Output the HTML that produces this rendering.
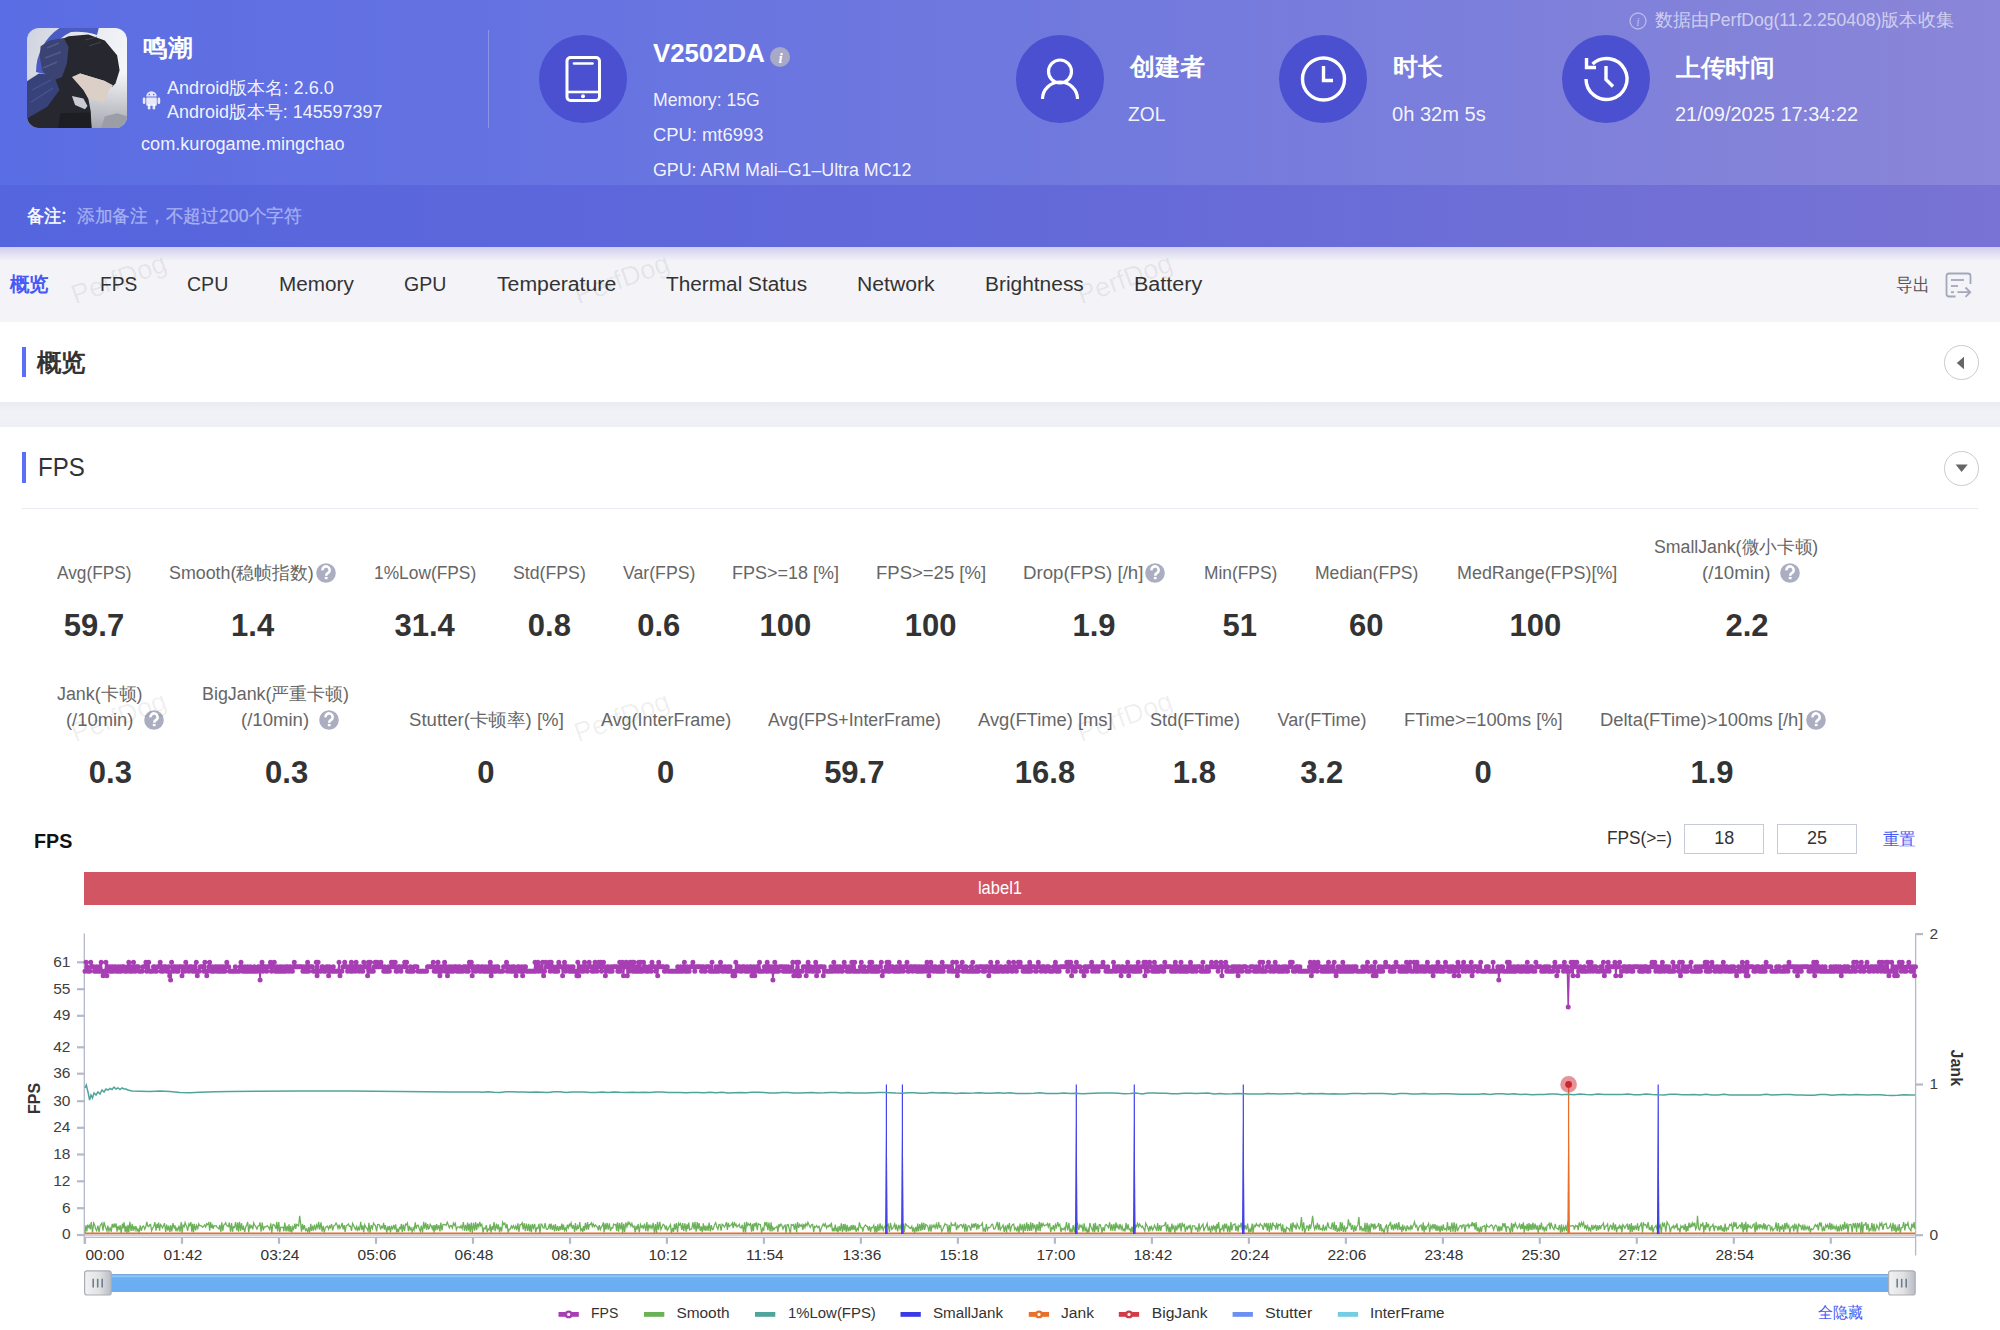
<!DOCTYPE html>
<html><head><meta charset="utf-8">
<style>
html,body{margin:0;padding:0;}
body{width:2000px;height:1330px;overflow:hidden;position:relative;background:#fff;font-family:"Liberation Sans",sans-serif;}
.a{position:absolute;}
.t{position:absolute;white-space:nowrap;font-family:"Liberation Sans",sans-serif;}
#hdr{position:absolute;left:0;top:0;width:2000px;height:185px;background:linear-gradient(90deg,#5b6de4 0%,#6f78de 50%,#8a86d8 100%);}
#note{position:absolute;left:0;top:185px;width:2000px;height:62px;background:linear-gradient(90deg,#5565de 0%,#6369d9 50%,#7873d4 100%);}
#tabs{position:absolute;left:0;top:247px;width:2000px;height:75px;background:#f3f3f8;}
#tabshadow{position:absolute;left:0;top:247px;width:2000px;height:14px;background:linear-gradient(180deg,rgba(120,110,210,0.28),rgba(120,110,210,0));}
.circ{position:absolute;width:88px;height:88px;border-radius:50%;background:#4b50d0;}
.bar{position:absolute;left:22px;width:4px;background:#5a6ff5;}
.cbtn{position:absolute;width:32.6px;height:32.6px;border:1px solid #c9ccd4;border-radius:50%;background:#fff;}
.q{position:absolute;width:20px;height:20px;border-radius:50%;background:#a9acbf;color:#fff;font-weight:700;font-size:15px;line-height:20px;text-align:center;font-family:"Liberation Sans",sans-serif;}
.inp{position:absolute;top:824px;height:28px;width:78px;border:1px solid #c6cad6;background:#fff;}
.wm{position:absolute;font-size:27px;line-height:27px;color:rgba(0,0,0,0.065);transform:rotate(-20deg);transform-origin:0 100%;font-family:"Liberation Sans",sans-serif;white-space:nowrap;}
</style></head><body>
<div id="hdr"></div>
<div id="note"></div>
<div id="tabs"></div>
<div id="tabshadow"></div>
<div class="a" style="left:0;top:402px;width:2000px;height:25px;background:linear-gradient(180deg,#e9ebf2,#f1f2f7 40%,#eef0f5);"></div>
<div class="a" style="left:488px;top:30px;width:1px;height:98px;background:rgba(255,255,255,0.25);"></div>
<div class="a" style="left:27px;top:28px;width:100px;height:100px;border-radius:12px;overflow:hidden;"><svg width="100" height="100" viewBox="0 0 100 100" style="display:block">
<defs>
<linearGradient id="avbg" x1="0" y1="0" x2="1" y2="0.3"><stop offset="0" stop-color="#cfd3de"/><stop offset="0.6" stop-color="#e9ebf0"/><stop offset="1" stop-color="#f4f5f8"/></linearGradient>
<linearGradient id="avb" x1="0" y1="0" x2="0" y2="1"><stop offset="0.45" stop-color="rgba(150,152,162,0)"/><stop offset="1" stop-color="rgba(140,142,152,0.75)"/></linearGradient>
</defs>
<rect width="100" height="100" fill="url(#avbg)"/>
<rect width="100" height="100" fill="url(#avb)"/>
<path d="M34 -1 A53 53 0 0 0 9 44 L17 46 A46 46 0 0 1 44 4 Q58 3 70 7 L72 -1 Z" fill="#4b5bc4"/>
<polygon points="77.8,88.6 90.1,85.3 100.8,88.6 100.8,101.1 73.7,101.1" fill="#9c9ea7"/>
<polygon points="28.4,14.1 41.6,8.3 61.3,6.6 77.8,12.4 90.1,27.3 92.6,42.3 88.5,55.5 85.2,58.8 77.8,53.0 67.1,49.7 53.1,45.6 46.5,48.9 58.0,63.8 61.3,70.4 63.8,83.7 64.6,101.1 -1.2,101.1 -1.2,91.1 16.0,74.6 22.6,58.8 28.4,42.3 30.0,29.0" fill="#27282f"/>
<polygon points="-1.2,53.9 11.9,45.6 26.7,47.2 32.5,62.1 20.2,78.7 -1.2,91.1" fill="#38427a"/>
<polygon points="13.6,18.2 22.6,12.4 36.6,9.9 41.6,19.1 39.9,35.6 35.0,48.9 22.6,53.9 15.2,42.3 12.8,29.0" fill="#3b4372"/>
<polygon points="44.9,48.9 53.1,45.6 67.1,49.7 77.8,53.0 86.0,57.2 81.9,62.1 80.2,67.1 77.8,72.9 73.7,73.7 61.3,70.4 56.4,62.1" fill="#dccfc8"/>
<polygon points="44.9,67.9 56.4,70.4 60.5,77.9 58.0,81.2 48.1,77.1" fill="#c9ccd3"/>
<polygon points="33.3,85.3 63.0,84.5 64.6,101.1 30.9,101.1" fill="#1d1e23"/>
<path d="M20 20 L32 15 M18 30 L34 24 M16 40 L30 34" stroke="#5a6496" stroke-width="1.4" opacity="0.7"/>
<path d="M5 62 L24 52 M4 74 L26 60" stroke="#56609a" stroke-width="1.4" opacity="0.6"/>
<path d="M58 12 L70 9 M62 18 L74 14" stroke="#4a4c58" stroke-width="1" opacity="0.8"/>
</svg></div>
<!-- android icon -->
<svg class="a" style="left:142px;top:90px" width="19" height="20" viewBox="0 0 19 20">
 <path d="M4.2 6.6 A5.3 5.3 0 0 1 14.8 6.6 Z" fill="rgba(255,255,255,0.85)"/>
 <rect x="4.2" y="7.6" width="10.6" height="8.2" rx="1" fill="rgba(255,255,255,0.85)"/>
 <rect x="0.8" y="7.6" width="2.6" height="6.5" rx="1.3" fill="rgba(255,255,255,0.85)"/>
 <rect x="15.6" y="7.6" width="2.6" height="6.5" rx="1.3" fill="rgba(255,255,255,0.85)"/>
 <rect x="5.8" y="14" width="2.6" height="5.6" rx="1.3" fill="rgba(255,255,255,0.85)"/>
 <rect x="10.6" y="14" width="2.6" height="5.6" rx="1.3" fill="rgba(255,255,255,0.85)"/>
 <circle cx="7.3" cy="4.6" r="0.8" fill="#5b6de4"/><circle cx="11.7" cy="4.6" r="0.8" fill="#5b6de4"/>
</svg>
<div class="circ" style="left:539px;top:34.5px"></div>
<svg class="a" style="left:539px;top:34.5px" width="88" height="88" viewBox="0 0 88 88">
 <rect x="28" y="22.5" width="32.5" height="43" rx="3.5" fill="none" stroke="#fff" stroke-width="3"/>
 <line x1="35" y1="28.5" x2="53.5" y2="28.5" stroke="#fff" stroke-width="2.6" stroke-linecap="round"/>
 <line x1="29" y1="57" x2="59.5" y2="57" stroke="#fff" stroke-width="2.6"/>
 <circle cx="44" cy="61.2" r="2" fill="#fff"/>
</svg>
<svg class="a" style="left:769.5px;top:47px" width="20" height="20" viewBox="0 0 20 20"><circle cx="10" cy="10" r="10" fill="#a7a9c6"/><text x="10.5" y="15.5" font-family="Liberation Serif" font-style="italic" font-weight="700" font-size="15" fill="#fff" text-anchor="middle">i</text></svg>
<div class="circ" style="left:1016px;top:34.5px"></div>
<svg class="a" style="left:1016px;top:34.5px" width="88" height="88" viewBox="0 0 88 88">
 <circle cx="44" cy="36.5" r="11.5" fill="none" stroke="#fff" stroke-width="3.2"/>
 <path d="M26.5 64 A17.5 17 0 0 1 61.5 64" fill="none" stroke="#fff" stroke-width="3.2"/>
</svg>
<div class="circ" style="left:1279px;top:34.5px"></div>
<svg class="a" style="left:1279px;top:34.5px" width="88" height="88" viewBox="0 0 88 88">
 <circle cx="44.5" cy="44" r="21" fill="none" stroke="#fff" stroke-width="3.4"/>
 <path d="M44.5 31 V45.5 H54" fill="none" stroke="#fff" stroke-width="3.4"/>
</svg>
<div class="circ" style="left:1561.5px;top:34.5px"></div>
<svg class="a" style="left:1561.5px;top:34.5px" width="88" height="88" viewBox="0 0 88 88">
 <path d="M24 44 A20.5 20.5 0 1 0 30.5 29" fill="none" stroke="#fff" stroke-width="3.4"/>
 <path d="M24.5 23 V32.5 H34" fill="none" stroke="#fff" stroke-width="3.4"/>
 <path d="M44 31 V44.5 L51 51.5" fill="none" stroke="#fff" stroke-width="3.4"/>
</svg>
<svg class="a" style="left:1629px;top:12px" width="18" height="18" viewBox="0 0 18 18"><circle cx="9" cy="9" r="8" fill="none" stroke="rgba(255,255,255,0.45)" stroke-width="1.3"/><text x="9" y="13.6" font-family="Liberation Serif" font-style="italic" font-size="12" fill="rgba(255,255,255,0.5)" text-anchor="middle">i</text></svg>

<!-- export icon -->
<svg class="a" style="left:1945px;top:271.5px" width="27" height="27" viewBox="0 0 27 27">
 <path d="M10.5 24.5 H4 Q1.5 24.5 1.5 22 V4 Q1.5 1.5 4 1.5 H23 Q25.5 1.5 25.5 4 V12" fill="none" stroke="#a3a7ba" stroke-width="1.8"/>
 <line x1="6" y1="8" x2="19" y2="8" stroke="#a3a7ba" stroke-width="1.8"/>
 <line x1="6" y1="14" x2="13" y2="14" stroke="#a3a7ba" stroke-width="1.8"/>
 <line x1="6" y1="20.2" x2="9" y2="20.2" stroke="#a3a7ba" stroke-width="1.8"/>
 <path d="M12.5 20.2 H25 M20.5 15.5 L25.2 20.2 L20.5 24.8" fill="none" stroke="#a3a7ba" stroke-width="1.8"/>
</svg>

<!-- section bars -->
<div class="bar" style="top:347px;height:30px"></div>
<div class="bar" style="top:452px;height:31px"></div>
<div class="cbtn" style="left:1944px;top:345px"></div>
<svg class="a" style="left:1944px;top:345px" width="34" height="34"><path d="M20 11.8 L12.8 18 L20 24.2 Z" fill="#666"/></svg>
<div class="cbtn" style="left:1944px;top:451px"></div>
<svg class="a" style="left:1944px;top:451px" width="34" height="34"><path d="M11.6 13.4 L23.7 13.4 L17.6 21 Z" fill="#666"/></svg>
<div class="a" style="left:22px;top:507.5px;width:1956px;height:1px;background:#e9ebf1;"></div>

<!-- inputs -->
<div class="inp" style="left:1684px"></div>
<div class="inp" style="left:1777px"></div>
<div class="a" style="left:84px;top:871.5px;width:1831.5px;height:33.5px;background:#d15563;"></div>

<svg class="a" style="left:0;top:0" width="2000" height="1330" viewBox="0 0 2000 1330">
<line x1="84" y1="1237.3" x2="1915.6" y2="1237.3" stroke="#b9bccb" stroke-width="1.2"/>
<line x1="84" y1="1236.2" x2="1915.6" y2="1236.2" stroke="#ebe8ef" stroke-width="1"/>
<line x1="84.3" y1="933.5" x2="84.3" y2="1244" stroke="#b5b8c9" stroke-width="1.3"/>
<line x1="1915.6" y1="933.5" x2="1915.6" y2="1255.6" stroke="#b5b8c9" stroke-width="1.3"/>
<line x1="77" y1="962.3" x2="84" y2="962.3" stroke="#b5b8c9" stroke-width="2.2"/>
<text x="70.5" y="966.6" font-size="15.5" fill="#404040" text-anchor="end" font-family="Liberation Sans">61</text>
<line x1="77" y1="989.2" x2="84" y2="989.2" stroke="#b5b8c9" stroke-width="2.2"/>
<text x="70.5" y="993.5" font-size="15.5" fill="#404040" text-anchor="end" font-family="Liberation Sans">55</text>
<line x1="77" y1="1015.8" x2="84" y2="1015.8" stroke="#b5b8c9" stroke-width="2.2"/>
<text x="70.5" y="1020.1" font-size="15.5" fill="#404040" text-anchor="end" font-family="Liberation Sans">49</text>
<line x1="77" y1="1047.3" x2="84" y2="1047.3" stroke="#b5b8c9" stroke-width="2.2"/>
<text x="70.5" y="1051.6" font-size="15.5" fill="#404040" text-anchor="end" font-family="Liberation Sans">42</text>
<line x1="77" y1="1073.7" x2="84" y2="1073.7" stroke="#b5b8c9" stroke-width="2.2"/>
<text x="70.5" y="1078.0" font-size="15.5" fill="#404040" text-anchor="end" font-family="Liberation Sans">36</text>
<line x1="77" y1="1101.2" x2="84" y2="1101.2" stroke="#b5b8c9" stroke-width="2.2"/>
<text x="70.5" y="1105.5" font-size="15.5" fill="#404040" text-anchor="end" font-family="Liberation Sans">30</text>
<line x1="77" y1="1127.8" x2="84" y2="1127.8" stroke="#b5b8c9" stroke-width="2.2"/>
<text x="70.5" y="1132.1" font-size="15.5" fill="#404040" text-anchor="end" font-family="Liberation Sans">24</text>
<line x1="77" y1="1154.5" x2="84" y2="1154.5" stroke="#b5b8c9" stroke-width="2.2"/>
<text x="70.5" y="1158.8" font-size="15.5" fill="#404040" text-anchor="end" font-family="Liberation Sans">18</text>
<line x1="77" y1="1181.3" x2="84" y2="1181.3" stroke="#b5b8c9" stroke-width="2.2"/>
<text x="70.5" y="1185.6" font-size="15.5" fill="#404040" text-anchor="end" font-family="Liberation Sans">12</text>
<line x1="77" y1="1208.2" x2="84" y2="1208.2" stroke="#b5b8c9" stroke-width="2.2"/>
<text x="70.5" y="1212.5" font-size="15.5" fill="#404040" text-anchor="end" font-family="Liberation Sans">6</text>
<line x1="77" y1="1235" x2="84" y2="1235" stroke="#b5b8c9" stroke-width="2.2"/>
<text x="70.5" y="1239.3" font-size="15.5" fill="#404040" text-anchor="end" font-family="Liberation Sans">0</text>
<line x1="1915.6" y1="934.1" x2="1923" y2="934.1" stroke="#b5b8c9" stroke-width="2.2"/>
<text x="1929.5" y="938.5" font-size="15.5" fill="#404040" font-family="Liberation Sans">2</text>
<line x1="1915.6" y1="1084.5" x2="1923" y2="1084.5" stroke="#b5b8c9" stroke-width="2.2"/>
<text x="1929.5" y="1088.9" font-size="15.5" fill="#404040" font-family="Liberation Sans">1</text>
<line x1="1915.6" y1="1235.2" x2="1923" y2="1235.2" stroke="#b5b8c9" stroke-width="2.2"/>
<text x="1929.5" y="1239.6" font-size="15.5" fill="#404040" font-family="Liberation Sans">0</text>
<line x1="85.0" y1="1237.5" x2="85.0" y2="1243.8" stroke="#b5b8c9" stroke-width="2.2"/>
<text x="85.5" y="1260.4" font-size="15.5" fill="#333" font-family="Liberation Sans">00:00</text>
<line x1="182.0" y1="1237.5" x2="182.0" y2="1243.8" stroke="#b5b8c9" stroke-width="2.2"/>
<text x="183.0" y="1260.4" font-size="15.5" fill="#333" text-anchor="middle" font-family="Liberation Sans">01:42</text>
<line x1="279.0" y1="1237.5" x2="279.0" y2="1243.8" stroke="#b5b8c9" stroke-width="2.2"/>
<text x="280.0" y="1260.4" font-size="15.5" fill="#333" text-anchor="middle" font-family="Liberation Sans">03:24</text>
<line x1="376.0" y1="1237.5" x2="376.0" y2="1243.8" stroke="#b5b8c9" stroke-width="2.2"/>
<text x="377.0" y="1260.4" font-size="15.5" fill="#333" text-anchor="middle" font-family="Liberation Sans">05:06</text>
<line x1="473.0" y1="1237.5" x2="473.0" y2="1243.8" stroke="#b5b8c9" stroke-width="2.2"/>
<text x="474.0" y="1260.4" font-size="15.5" fill="#333" text-anchor="middle" font-family="Liberation Sans">06:48</text>
<line x1="570.0" y1="1237.5" x2="570.0" y2="1243.8" stroke="#b5b8c9" stroke-width="2.2"/>
<text x="571.0" y="1260.4" font-size="15.5" fill="#333" text-anchor="middle" font-family="Liberation Sans">08:30</text>
<line x1="666.9" y1="1237.5" x2="666.9" y2="1243.8" stroke="#b5b8c9" stroke-width="2.2"/>
<text x="667.9" y="1260.4" font-size="15.5" fill="#333" text-anchor="middle" font-family="Liberation Sans">10:12</text>
<line x1="763.9" y1="1237.5" x2="763.9" y2="1243.8" stroke="#b5b8c9" stroke-width="2.2"/>
<text x="764.9" y="1260.4" font-size="15.5" fill="#333" text-anchor="middle" font-family="Liberation Sans">11:54</text>
<line x1="860.9" y1="1237.5" x2="860.9" y2="1243.8" stroke="#b5b8c9" stroke-width="2.2"/>
<text x="861.9" y="1260.4" font-size="15.5" fill="#333" text-anchor="middle" font-family="Liberation Sans">13:36</text>
<line x1="957.9" y1="1237.5" x2="957.9" y2="1243.8" stroke="#b5b8c9" stroke-width="2.2"/>
<text x="958.9" y="1260.4" font-size="15.5" fill="#333" text-anchor="middle" font-family="Liberation Sans">15:18</text>
<line x1="1054.9" y1="1237.5" x2="1054.9" y2="1243.8" stroke="#b5b8c9" stroke-width="2.2"/>
<text x="1055.9" y="1260.4" font-size="15.5" fill="#333" text-anchor="middle" font-family="Liberation Sans">17:00</text>
<line x1="1151.9" y1="1237.5" x2="1151.9" y2="1243.8" stroke="#b5b8c9" stroke-width="2.2"/>
<text x="1152.9" y="1260.4" font-size="15.5" fill="#333" text-anchor="middle" font-family="Liberation Sans">18:42</text>
<line x1="1248.9" y1="1237.5" x2="1248.9" y2="1243.8" stroke="#b5b8c9" stroke-width="2.2"/>
<text x="1249.9" y="1260.4" font-size="15.5" fill="#333" text-anchor="middle" font-family="Liberation Sans">20:24</text>
<line x1="1345.9" y1="1237.5" x2="1345.9" y2="1243.8" stroke="#b5b8c9" stroke-width="2.2"/>
<text x="1346.9" y="1260.4" font-size="15.5" fill="#333" text-anchor="middle" font-family="Liberation Sans">22:06</text>
<line x1="1442.9" y1="1237.5" x2="1442.9" y2="1243.8" stroke="#b5b8c9" stroke-width="2.2"/>
<text x="1443.9" y="1260.4" font-size="15.5" fill="#333" text-anchor="middle" font-family="Liberation Sans">23:48</text>
<line x1="1539.8" y1="1237.5" x2="1539.8" y2="1243.8" stroke="#b5b8c9" stroke-width="2.2"/>
<text x="1540.8" y="1260.4" font-size="15.5" fill="#333" text-anchor="middle" font-family="Liberation Sans">25:30</text>
<line x1="1636.8" y1="1237.5" x2="1636.8" y2="1243.8" stroke="#b5b8c9" stroke-width="2.2"/>
<text x="1637.8" y="1260.4" font-size="15.5" fill="#333" text-anchor="middle" font-family="Liberation Sans">27:12</text>
<line x1="1733.8" y1="1237.5" x2="1733.8" y2="1243.8" stroke="#b5b8c9" stroke-width="2.2"/>
<text x="1734.8" y="1260.4" font-size="15.5" fill="#333" text-anchor="middle" font-family="Liberation Sans">28:54</text>
<line x1="1830.8" y1="1237.5" x2="1830.8" y2="1243.8" stroke="#b5b8c9" stroke-width="2.2"/>
<text x="1831.8" y="1260.4" font-size="15.5" fill="#333" text-anchor="middle" font-family="Liberation Sans">30:36</text>
<text x="0" y="0" transform="translate(40.2,1098.5) rotate(-90)" font-size="16" font-weight="700" fill="#333" text-anchor="middle" font-family="Liberation Sans">FPS</text>
<text x="0" y="0" transform="translate(1950.8,1067.8) rotate(90)" font-size="16" font-weight="700" fill="#333" text-anchor="middle" font-family="Liberation Sans">Jank</text>
<polyline points="85.0 1233.0 85.9 1225.4 86.8 1231.4 87.7 1224.7 88.5 1227.2 89.4 1225.4 90.2 1229.4 91.3 1222.1 92.5 1232.6 93.7 1223.0 94.7 1225.2 95.6 1228.7 96.7 1230.8 97.9 1225.6 99.1 1232.2 100.0 1226.1 100.8 1224.7 101.9 1223.2 103.0 1230.7 104.0 1222.0 105.2 1226.5 106.0 1228.6 107.0 1231.1 107.8 1225.5 108.9 1231.1 110.1 1228.0 111.3 1231.8 112.2 1224.0 113.2 1227.7 114.2 1223.5 115.0 1227.6 116.1 1223.3 117.0 1231.7 118.0 1226.0 119.2 1230.2 120.1 1225.1 121.2 1232.9 122.4 1223.5 123.2 1228.4 124.1 1222.2 125.2 1231.9 126.1 1225.9 127.0 1232.9 128.0 1224.8 128.8 1232.5 129.9 1221.9 131.1 1231.0 132.2 1223.9 133.0 1230.8 133.9 1226.2 135.1 1230.0 135.9 1226.1 137.1 1230.9 137.9 1229.0 139.1 1232.2 140.2 1225.3 141.3 1230.8 142.5 1226.5 143.6 1226.1 144.7 1229.3 145.9 1226.5 146.8 1221.9 147.8 1226.0 148.8 1226.6 149.7 1224.7 150.6 1224.4 151.6 1230.9 152.7 1228.1 153.8 1226.2 154.9 1222.1 156.0 1230.7 157.0 1223.8 157.8 1228.0 158.6 1222.7 159.6 1230.7 160.5 1224.5 161.5 1225.7 162.5 1227.8 163.6 1225.8 164.5 1223.1 165.7 1231.8 166.7 1224.5 167.8 1230.7 168.7 1225.6 169.9 1231.8 170.8 1225.2 171.8 1231.5 173.0 1223.2 174.2 1228.6 175.0 1225.3 175.9 1231.2 176.9 1228.3 177.8 1230.4 179.0 1225.7 180.1 1231.8 181.2 1222.0 182.1 1232.9 183.1 1225.2 184.2 1226.8 185.1 1222.5 185.9 1224.7 186.8 1226.9 187.6 1230.9 188.9 1224.0 189.7 1225.6 190.9 1222.1 191.8 1231.8 192.6 1223.8 193.5 1232.5 194.4 1223.8 195.6 1230.4 196.6 1225.4 197.8 1228.5 198.7 1223.7 199.6 1225.7 200.5 1225.7 201.7 1226.1 202.6 1227.3 203.6 1226.4 204.6 1225.0 205.7 1227.0 206.6 1223.7 207.6 1224.7 208.8 1222.6 209.7 1230.6 210.6 1222.0 211.5 1227.8 212.3 1225.3 213.1 1228.8 213.9 1225.6 214.9 1226.1 216.1 1225.7 217.1 1227.3 218.0 1227.9 219.0 1228.9 219.8 1224.8 220.9 1232.0 221.8 1222.3 222.8 1230.8 223.7 1225.1 224.6 1224.6 225.6 1222.8 226.6 1225.2 227.6 1226.1 228.5 1226.5 229.4 1222.5 230.5 1231.8 231.6 1223.0 232.5 1231.8 233.4 1226.9 234.5 1227.6 235.6 1222.0 236.7 1230.5 237.7 1222.6 238.5 1231.7 239.5 1221.9 240.6 1230.8 241.5 1223.2 242.6 1229.8 243.5 1226.9 244.7 1232.2 245.6 1227.1 246.9 1224.5 247.7 1222.0 248.7 1232.5 249.8 1224.3 250.7 1227.6 251.7 1225.8 252.8 1229.4 253.7 1222.8 254.8 1225.5 255.8 1226.7 256.9 1229.2 258.1 1226.0 259.2 1225.7 260.0 1222.3 261.1 1231.8 262.2 1222.6 263.3 1230.4 264.3 1226.7 265.2 1227.0 266.4 1226.4 267.3 1225.7 268.4 1227.1 269.6 1229.6 270.8 1223.4 271.8 1233.0 272.7 1225.1 273.6 1224.3 274.7 1225.5 275.9 1228.8 276.8 1221.8 277.6 1231.4 278.8 1222.1 279.7 1232.3 280.8 1227.1 281.9 1227.3 283.0 1227.1 283.9 1231.3 284.8 1222.5 286.0 1231.4 287.1 1225.8 288.2 1231.5 289.0 1224.3 290.0 1231.8 290.8 1226.2 291.7 1232.7 292.8 1226.9 293.6 1229.1 294.9 1223.6 295.7 1228.9 296.6 1224.5 297.7 1225.1 298.6 1225.9 299.7 1215.9 300.6 1222.9 301.5 1231.6 302.5 1224.2 303.4 1229.6 304.4 1225.2 305.5 1230.3 306.5 1229.0 307.7 1232.0 308.6 1227.2 309.7 1232.7 310.8 1223.9 311.7 1230.8 312.6 1227.0 313.5 1229.5 314.5 1224.7 315.6 1230.5 316.6 1224.9 317.8 1227.8 318.6 1221.9 319.8 1229.6 321.0 1222.4 322.1 1231.7 323.2 1225.9 324.3 1232.5 325.3 1227.9 326.5 1226.6 327.5 1226.1 328.6 1229.3 329.6 1226.1 330.4 1227.7 331.6 1224.0 332.6 1230.5 333.7 1226.0 334.9 1225.4 336.1 1223.0 336.9 1224.4 338.0 1228.5 339.1 1224.6 339.9 1228.4 341.1 1226.5 342.1 1222.9 343.1 1229.4 344.2 1225.1 345.1 1231.9 346.3 1225.5 347.5 1225.1 348.5 1223.9 349.4 1226.3 350.5 1226.2 351.5 1230.8 352.6 1223.3 353.5 1225.2 354.3 1227.0 355.4 1229.5 356.6 1226.6 357.4 1231.2 358.4 1227.4 359.5 1230.4 360.7 1221.9 361.8 1229.8 362.8 1225.3 363.7 1232.5 364.7 1224.7 366.0 1227.5 366.8 1228.2 368.1 1230.9 368.9 1222.8 370.1 1232.6 371.2 1225.1 372.4 1228.6 373.5 1223.0 374.4 1224.7 375.4 1225.4 376.6 1231.3 377.6 1224.6 378.8 1224.5 379.7 1225.3 380.6 1229.6 381.5 1226.4 382.7 1227.8 383.6 1222.8 384.5 1229.6 385.4 1225.1 386.7 1232.6 387.8 1226.4 388.6 1230.0 389.5 1225.8 390.5 1232.3 391.4 1226.7 392.5 1228.9 393.7 1224.9 394.5 1229.5 395.7 1224.3 396.6 1232.5 397.6 1228.6 398.5 1232.2 399.5 1227.6 400.4 1228.6 401.4 1224.0 402.2 1232.2 403.3 1224.5 404.5 1231.1 405.5 1224.1 406.5 1224.9 407.4 1223.1 408.4 1231.1 409.3 1225.9 410.2 1229.6 411.1 1227.9 412.2 1232.0 413.2 1228.0 414.1 1230.1 415.3 1222.4 416.1 1228.9 417.0 1225.7 418.1 1225.1 419.2 1228.4 420.3 1231.3 421.3 1225.6 422.5 1232.6 423.7 1221.9 424.5 1228.7 425.8 1222.6 426.6 1229.8 427.7 1224.2 428.5 1228.9 429.3 1228.4 430.2 1224.3 431.3 1226.1 432.3 1229.0 433.2 1225.2 434.0 1232.8 434.9 1224.9 435.7 1230.4 436.7 1224.2 437.6 1229.7 438.8 1225.1 440.0 1231.5 440.8 1222.5 442.0 1230.5 442.9 1224.7 443.9 1224.5 444.9 1224.7 446.1 1225.4 447.2 1222.3 448.4 1225.1 449.4 1228.0 450.3 1225.6 451.4 1225.9 452.4 1228.1 453.4 1223.2 454.3 1225.5 455.3 1223.3 456.4 1229.6 457.4 1227.1 458.2 1227.2 459.1 1226.8 460.0 1227.9 461.0 1225.7 462.2 1228.8 463.4 1222.0 464.4 1230.8 465.6 1224.8 466.7 1230.9 467.6 1222.5 468.6 1230.4 469.4 1223.7 470.2 1232.0 471.3 1222.5 472.3 1232.9 473.5 1222.8 474.7 1230.6 475.6 1222.2 476.7 1229.9 477.6 1223.5 478.8 1226.7 479.8 1221.9 480.7 1225.9 481.8 1224.3 483.1 1232.6 484.0 1228.0 485.1 1228.9 486.4 1225.1 487.2 1232.3 488.2 1229.1 489.1 1229.9 490.1 1224.3 491.0 1232.6 492.2 1226.2 493.0 1229.9 494.0 1222.2 495.2 1231.1 496.4 1223.5 497.5 1229.3 498.4 1224.3 499.6 1232.4 500.5 1226.9 501.7 1231.4 502.6 1222.1 503.8 1224.5 504.9 1223.1 506.0 1228.4 507.0 1224.0 508.2 1232.6 509.2 1229.2 510.3 1229.1 511.3 1225.9 512.3 1228.1 513.4 1225.6 514.6 1228.7 515.7 1226.0 516.8 1230.2 517.9 1223.4 518.9 1231.8 520.1 1224.5 521.0 1224.8 522.2 1222.8 523.2 1229.5 524.2 1223.1 525.3 1231.1 526.4 1223.5 527.6 1230.9 528.6 1223.8 529.6 1231.4 530.5 1224.6 531.4 1232.2 532.4 1224.0 533.5 1228.2 534.7 1223.8 535.7 1232.4 536.8 1227.8 537.8 1228.5 539.0 1223.8 539.9 1232.9 541.1 1224.0 542.1 1224.9 543.1 1228.0 544.1 1228.1 545.1 1223.2 546.3 1229.1 547.5 1229.3 548.4 1227.9 549.5 1223.9 550.3 1229.3 551.1 1223.7 552.3 1229.8 553.4 1224.9 554.5 1231.3 555.4 1224.1 556.6 1230.8 557.7 1226.0 558.8 1230.9 559.9 1226.1 560.8 1230.2 561.8 1223.6 562.7 1229.8 563.5 1224.7 564.5 1230.6 565.5 1228.2 566.4 1230.5 567.3 1224.7 568.3 1227.8 569.3 1224.4 570.1 1226.1 571.1 1223.0 572.3 1228.7 573.4 1225.0 574.6 1232.0 575.4 1223.0 576.5 1230.4 577.6 1226.0 578.5 1229.0 579.8 1222.0 580.8 1230.5 581.9 1228.8 582.7 1232.2 583.6 1226.0 584.4 1230.6 585.4 1222.9 586.6 1229.8 587.5 1222.1 588.5 1229.7 589.3 1224.7 590.2 1224.9 591.3 1222.9 592.3 1226.4 593.1 1223.9 594.3 1226.8 595.3 1224.9 596.4 1226.3 597.5 1227.3 598.3 1230.3 599.2 1225.2 600.3 1229.6 601.4 1226.7 602.4 1225.7 603.3 1222.3 604.1 1232.4 605.1 1223.4 606.0 1229.7 607.1 1222.9 608.2 1229.6 609.4 1223.3 610.4 1231.0 611.6 1227.8 612.7 1228.2 613.6 1224.0 614.8 1224.9 615.8 1224.5 616.6 1230.9 617.5 1222.2 618.6 1231.8 619.5 1223.1 620.7 1229.3 621.8 1222.3 622.6 1233.0 623.7 1223.8 624.6 1232.1 625.8 1222.5 626.9 1226.8 628.1 1222.3 628.9 1224.3 629.7 1222.8 630.9 1226.2 631.9 1223.5 633.0 1227.1 634.1 1226.0 635.2 1232.4 636.1 1225.8 637.0 1229.7 638.2 1224.0 639.3 1232.4 640.5 1224.5 641.5 1227.2 642.5 1225.9 643.4 1229.0 644.5 1223.5 645.8 1231.1 646.9 1222.0 647.9 1231.4 648.8 1224.5 650.0 1228.0 650.9 1225.5 652.0 1228.5 653.2 1222.8 654.4 1232.9 655.5 1224.1 656.5 1233.0 657.5 1221.9 658.5 1229.8 659.8 1221.8 660.9 1229.6 662.0 1226.9 663.2 1224.3 664.4 1225.3 665.5 1229.7 666.4 1225.7 667.3 1230.4 668.4 1228.6 669.3 1226.8 670.5 1224.6 671.4 1232.9 672.6 1227.9 673.5 1231.9 674.5 1223.9 675.4 1229.6 676.4 1223.1 677.6 1232.3 678.5 1223.2 679.5 1225.0 680.5 1223.6 681.8 1229.9 682.7 1223.2 683.7 1231.2 684.9 1223.4 686.1 1231.6 686.9 1224.4 687.8 1229.2 688.7 1222.6 689.7 1229.9 690.8 1229.1 691.7 1229.0 692.9 1222.3 694.1 1229.4 695.0 1221.9 696.1 1231.6 697.3 1222.1 698.1 1229.1 699.1 1223.2 700.3 1230.8 701.3 1226.3 702.3 1232.3 703.3 1223.4 704.2 1230.5 705.0 1225.5 705.9 1230.9 707.1 1225.7 708.1 1230.8 709.1 1222.7 710.3 1231.3 711.3 1225.1 712.4 1229.8 713.3 1229.2 714.5 1224.7 715.7 1222.6 716.8 1226.8 717.9 1229.3 719.0 1224.6 720.0 1224.5 721.1 1230.6 722.2 1224.2 723.3 1225.2 724.4 1227.1 725.4 1225.5 726.4 1222.2 727.4 1229.9 728.3 1222.8 729.3 1226.6 730.3 1225.6 731.3 1224.8 732.3 1223.0 733.1 1228.1 734.3 1222.0 735.2 1225.7 736.0 1224.3 737.0 1227.0 738.3 1225.8 739.3 1224.3 740.1 1227.5 741.2 1227.9 742.3 1224.8 743.5 1232.4 744.6 1222.4 745.5 1232.7 746.7 1221.9 747.5 1225.5 748.5 1223.8 749.5 1225.1 750.5 1223.7 751.6 1231.7 752.5 1223.8 753.4 1231.3 754.2 1223.2 755.2 1225.6 756.2 1222.4 757.3 1230.2 758.2 1223.6 759.4 1224.5 760.4 1224.5 761.6 1232.8 762.8 1228.3 763.7 1230.7 764.8 1222.1 766.0 1225.4 766.8 1222.0 767.9 1230.1 768.9 1222.5 770.1 1231.4 771.1 1222.3 772.0 1231.5 772.8 1227.2 773.9 1229.6 775.1 1227.8 776.1 1227.2 777.0 1226.3 777.9 1232.0 778.9 1224.1 779.7 1226.4 781.0 1224.1 782.0 1225.8 783.0 1229.0 784.1 1226.1 785.1 1225.1 786.0 1232.8 787.0 1224.9 788.2 1224.6 789.2 1228.8 790.4 1233.0 791.3 1224.6 792.4 1225.3 793.4 1224.6 794.4 1229.6 795.5 1223.7 796.6 1232.5 797.5 1222.1 798.7 1227.9 799.7 1224.4 801.0 1226.4 802.0 1224.6 802.9 1229.9 803.8 1224.0 805.0 1227.5 805.9 1223.7 807.0 1225.6 807.9 1222.3 809.1 1225.1 810.3 1227.5 811.5 1224.8 812.6 1224.3 813.7 1232.2 814.5 1226.5 815.7 1227.4 816.6 1225.5 817.9 1227.7 819.0 1226.3 820.2 1232.3 821.1 1228.8 822.0 1226.8 823.2 1224.0 824.3 1226.1 825.3 1223.7 826.5 1228.0 827.3 1226.1 828.2 1226.8 829.2 1225.0 830.3 1226.6 831.4 1222.6 832.4 1231.3 833.2 1228.0 834.1 1231.4 835.3 1224.5 836.1 1231.4 837.2 1228.2 838.0 1232.3 839.1 1226.0 840.2 1231.0 841.3 1223.4 842.4 1232.1 843.4 1224.1 844.3 1230.4 845.1 1223.9 846.2 1231.8 847.1 1224.9 848.2 1231.4 849.3 1226.7 850.2 1231.0 851.2 1225.1 852.0 1230.0 853.1 1224.9 853.9 1230.0 855.0 1225.3 856.1 1231.7 857.2 1228.3 858.3 1230.2 859.4 1222.4 860.7 1227.6 861.9 1227.4 862.8 1231.5 863.7 1227.8 864.7 1225.8 865.5 1224.9 866.6 1226.4 867.4 1226.4 868.4 1230.5 869.5 1226.2 870.5 1231.8 871.4 1227.5 872.6 1227.7 873.8 1225.1 874.9 1232.6 875.7 1226.2 876.9 1232.5 877.8 1224.4 878.9 1230.9 880.1 1223.3 881.0 1228.9 882.1 1226.1 883.2 1230.2 884.1 1227.4 885.0 1226.1 886.1 1225.3 887.2 1225.8 888.2 1224.4 889.4 1232.0 890.5 1222.8 891.8 1229.3 892.7 1228.3 893.6 1226.5 894.7 1223.8 895.5 1229.6 896.4 1224.5 897.6 1231.3 898.8 1224.8 900.0 1229.0 901.1 1224.8 902.3 1227.6 903.4 1223.9 904.3 1232.2 905.4 1223.8 906.2 1224.4 907.3 1226.0 908.4 1226.0 909.4 1227.9 910.6 1228.4 911.8 1226.1 912.7 1231.6 913.6 1227.4 914.7 1232.8 915.8 1226.8 916.9 1231.7 917.7 1223.5 918.6 1231.3 919.8 1224.1 920.9 1230.8 921.8 1222.6 922.6 1229.9 923.8 1222.9 924.6 1229.9 925.8 1224.6 926.6 1225.1 927.7 1226.2 928.9 1231.5 930.0 1224.5 931.0 1231.7 932.0 1225.4 933.0 1227.2 934.0 1224.9 935.1 1228.2 936.3 1224.0 937.5 1229.1 938.6 1222.1 939.6 1227.1 940.7 1225.8 941.7 1231.5 942.9 1229.1 943.8 1226.7 945.0 1223.7 945.9 1224.7 947.1 1224.9 948.0 1232.6 949.2 1224.8 950.1 1233.0 951.2 1223.2 952.3 1225.4 953.4 1224.9 954.5 1225.6 955.5 1222.3 956.5 1230.2 957.7 1225.6 958.7 1227.4 959.6 1225.4 960.8 1224.5 961.6 1225.2 962.5 1227.4 963.7 1223.7 964.8 1231.7 965.7 1223.8 966.9 1231.6 968.0 1226.0 969.0 1225.7 969.9 1227.7 970.8 1230.6 971.8 1223.7 972.9 1227.8 973.8 1223.6 974.6 1226.5 975.8 1223.2 976.8 1229.6 977.8 1224.0 978.9 1228.1 979.9 1225.6 981.1 1225.4 982.4 1223.0 983.2 1230.7 984.2 1228.7 985.3 1231.9 986.3 1224.0 987.4 1229.9 988.5 1227.4 989.5 1227.5 990.6 1226.7 991.7 1224.3 992.6 1224.2 993.8 1229.0 994.9 1228.9 996.1 1226.1 997.2 1221.9 998.5 1230.1 999.3 1222.3 1000.3 1229.8 1001.2 1228.0 1002.1 1226.9 1003.1 1224.9 1004.2 1231.8 1005.4 1225.6 1006.5 1232.7 1007.4 1224.8 1008.5 1228.0 1009.4 1223.1 1010.3 1231.6 1011.4 1226.8 1012.5 1224.6 1013.7 1224.1 1014.7 1229.5 1015.7 1227.8 1016.9 1231.4 1017.9 1225.8 1019.0 1233.0 1020.1 1223.6 1021.2 1230.4 1022.3 1224.3 1023.4 1232.8 1024.3 1223.7 1025.4 1230.9 1026.7 1222.3 1027.7 1231.2 1028.5 1224.1 1029.8 1231.0 1030.7 1222.3 1031.6 1230.8 1032.7 1223.2 1033.7 1227.9 1034.8 1224.7 1035.9 1232.7 1037.0 1224.1 1038.1 1230.7 1039.3 1221.9 1040.1 1231.2 1041.1 1222.7 1042.0 1226.4 1043.1 1223.5 1044.2 1225.8 1045.4 1225.2 1046.6 1224.9 1047.5 1223.6 1048.3 1227.0 1049.6 1223.2 1050.7 1232.1 1051.6 1227.7 1052.6 1228.7 1053.4 1225.2 1054.5 1231.1 1055.4 1224.7 1056.5 1227.4 1057.7 1222.2 1058.6 1226.0 1059.8 1224.4 1061.0 1232.1 1061.9 1228.4 1063.1 1229.7 1064.3 1227.7 1065.2 1230.2 1066.5 1222.2 1067.7 1230.5 1068.9 1222.9 1070.0 1232.5 1071.0 1229.1 1072.1 1232.5 1073.2 1225.2 1074.4 1232.2 1075.5 1224.4 1076.5 1224.7 1077.5 1223.3 1078.7 1229.8 1079.9 1224.9 1081.1 1227.1 1082.0 1225.4 1083.0 1231.7 1084.2 1223.3 1085.1 1231.4 1086.1 1228.1 1087.2 1232.8 1088.1 1229.2 1089.0 1232.5 1089.8 1223.0 1090.8 1226.5 1091.7 1228.6 1092.8 1231.6 1093.6 1223.5 1094.5 1232.4 1095.4 1222.9 1096.2 1229.0 1097.3 1226.7 1098.3 1231.9 1099.3 1224.5 1100.3 1224.8 1101.2 1228.1 1102.1 1232.9 1103.1 1227.2 1104.3 1231.1 1105.1 1225.6 1106.1 1224.4 1107.4 1225.9 1108.5 1227.7 1109.7 1222.2 1110.7 1230.8 1111.7 1224.4 1112.7 1230.6 1113.9 1223.9 1115.0 1231.1 1116.0 1222.3 1116.9 1228.2 1117.9 1225.3 1119.0 1229.6 1120.0 1223.8 1121.2 1229.1 1122.1 1226.1 1123.1 1230.6 1124.2 1229.1 1125.0 1231.5 1126.1 1222.8 1127.1 1229.7 1128.1 1224.4 1129.1 1229.5 1130.1 1229.0 1131.0 1232.3 1131.9 1226.5 1132.9 1232.1 1134.0 1222.8 1134.8 1231.4 1135.7 1225.4 1136.6 1226.6 1137.5 1223.3 1138.7 1226.7 1139.6 1224.0 1140.7 1225.8 1141.7 1227.3 1142.5 1226.1 1143.7 1228.8 1144.8 1231.2 1145.7 1223.2 1146.9 1225.6 1147.8 1227.5 1148.8 1231.6 1149.8 1226.0 1150.7 1229.4 1151.6 1226.7 1152.7 1230.0 1153.6 1228.1 1154.6 1225.2 1155.7 1227.9 1156.7 1231.0 1157.6 1223.2 1158.7 1230.9 1159.8 1225.2 1160.8 1230.9 1161.7 1226.1 1162.7 1226.1 1163.7 1225.7 1164.5 1225.5 1165.7 1222.0 1166.6 1231.5 1167.7 1224.4 1169.0 1232.5 1169.8 1226.8 1170.7 1232.3 1171.9 1223.7 1172.7 1228.6 1173.8 1226.2 1174.9 1232.8 1175.8 1225.5 1176.8 1230.3 1178.0 1225.0 1178.9 1227.5 1180.0 1223.0 1181.1 1231.3 1182.2 1222.7 1183.4 1226.3 1184.4 1224.7 1185.3 1231.9 1186.4 1227.1 1187.4 1229.1 1188.2 1226.1 1189.1 1227.8 1190.2 1224.8 1191.4 1232.8 1192.5 1225.9 1193.6 1225.8 1194.7 1225.8 1195.6 1229.2 1196.8 1227.8 1197.8 1232.1 1199.0 1223.4 1199.9 1230.0 1200.9 1227.6 1201.9 1225.9 1203.0 1224.1 1203.8 1231.2 1204.8 1228.0 1205.9 1226.8 1207.2 1223.5 1208.2 1230.6 1209.4 1227.3 1210.6 1232.9 1211.6 1225.6 1212.6 1229.5 1213.5 1226.2 1214.3 1229.0 1215.3 1225.7 1216.1 1232.7 1216.9 1223.9 1217.7 1228.6 1218.6 1222.1 1219.8 1232.9 1220.8 1228.9 1221.8 1229.5 1222.8 1224.6 1223.8 1231.7 1224.7 1223.5 1225.7 1228.5 1226.6 1223.5 1227.6 1232.3 1228.7 1225.5 1229.9 1232.5 1230.9 1222.1 1231.8 1230.4 1233.0 1224.9 1234.0 1224.4 1235.0 1224.0 1235.9 1231.0 1237.0 1225.6 1238.1 1231.7 1238.9 1225.5 1240.1 1226.8 1241.2 1222.7 1242.3 1230.4 1243.3 1222.2 1244.4 1229.2 1245.2 1225.1 1246.4 1229.7 1247.6 1223.6 1248.8 1232.6 1250.0 1228.8 1251.0 1232.2 1252.2 1223.6 1253.1 1232.9 1254.1 1225.4 1255.2 1226.8 1256.3 1223.7 1257.2 1225.6 1258.1 1225.1 1259.2 1226.6 1260.2 1223.6 1261.2 1225.0 1262.1 1225.7 1263.3 1229.8 1264.5 1222.9 1265.4 1226.2 1266.4 1224.1 1267.3 1230.6 1268.2 1223.1 1269.4 1232.1 1270.4 1222.8 1271.6 1230.2 1272.7 1222.5 1273.5 1225.4 1274.5 1225.5 1275.6 1228.4 1276.7 1222.9 1277.5 1229.6 1278.5 1224.6 1279.3 1225.3 1280.5 1224.1 1281.7 1231.5 1282.7 1224.3 1283.6 1232.7 1284.7 1228.3 1285.6 1232.9 1286.7 1227.1 1287.5 1228.1 1288.6 1228.8 1289.8 1231.1 1291.0 1223.4 1292.0 1232.3 1293.0 1222.4 1294.2 1227.0 1295.1 1225.5 1296.2 1229.5 1297.1 1223.7 1298.3 1226.6 1299.3 1228.8 1300.4 1226.9 1301.5 1217.1 1302.4 1231.1 1303.7 1222.4 1304.7 1232.9 1305.8 1229.2 1306.9 1225.9 1307.8 1226.1 1308.6 1231.0 1309.6 1224.4 1310.5 1228.9 1311.4 1225.0 1312.6 1215.9 1313.7 1226.0 1314.7 1229.6 1315.6 1226.2 1316.4 1228.3 1317.4 1222.9 1318.4 1229.6 1319.3 1224.7 1320.2 1229.6 1321.5 1228.7 1322.4 1230.1 1323.3 1224.6 1324.4 1231.0 1325.6 1227.1 1326.5 1229.3 1327.7 1222.4 1328.9 1227.5 1330.0 1228.0 1331.1 1228.7 1332.3 1222.7 1333.4 1229.8 1334.3 1221.9 1335.1 1230.8 1336.3 1225.0 1337.2 1231.9 1338.3 1228.6 1339.5 1231.5 1340.4 1222.0 1341.3 1230.9 1342.2 1222.5 1343.3 1231.9 1344.4 1225.7 1345.4 1232.1 1346.5 1227.8 1347.4 1228.3 1348.4 1219.3 1349.4 1225.3 1350.6 1223.7 1351.4 1229.9 1352.6 1224.8 1353.7 1231.9 1354.9 1225.3 1355.7 1231.0 1356.7 1227.0 1357.8 1225.1 1358.9 1217.1 1359.9 1230.4 1361.0 1226.1 1362.1 1230.4 1363.0 1228.5 1364.1 1231.4 1365.0 1222.9 1365.9 1232.2 1367.1 1222.8 1368.1 1232.7 1369.1 1224.7 1370.1 1232.8 1371.2 1223.3 1372.1 1226.5 1373.0 1223.9 1373.9 1229.7 1374.7 1223.6 1375.7 1228.2 1376.9 1226.6 1377.8 1226.0 1378.8 1223.0 1379.8 1230.9 1380.7 1224.1 1381.9 1230.7 1382.8 1229.0 1384.0 1232.8 1384.8 1229.0 1385.7 1226.3 1386.5 1225.1 1387.6 1233.0 1388.5 1225.3 1389.5 1225.2 1390.5 1221.9 1391.5 1229.7 1392.6 1224.6 1393.5 1230.5 1394.6 1223.8 1395.6 1229.2 1396.6 1223.2 1397.7 1230.1 1398.8 1222.2 1399.9 1229.9 1401.0 1226.6 1401.9 1232.1 1402.7 1224.6 1403.5 1229.4 1404.8 1226.6 1406.0 1231.3 1407.2 1225.4 1408.2 1229.2 1409.0 1227.4 1410.1 1229.5 1410.9 1224.9 1411.8 1229.5 1412.8 1226.3 1413.7 1224.5 1414.5 1221.9 1415.7 1226.8 1416.7 1225.4 1417.9 1231.1 1418.9 1227.4 1420.1 1225.8 1421.1 1225.1 1422.3 1230.6 1423.2 1222.4 1424.1 1232.7 1424.9 1225.5 1425.7 1229.9 1426.7 1226.8 1427.5 1226.0 1428.6 1223.5 1429.7 1232.1 1430.9 1225.5 1432.0 1228.5 1433.0 1224.0 1434.0 1229.1 1435.0 1224.1 1436.0 1231.0 1437.0 1225.2 1437.9 1230.9 1439.0 1225.8 1440.1 1232.4 1441.1 1225.7 1442.2 1230.9 1443.2 1224.4 1444.2 1229.7 1445.5 1228.6 1446.6 1230.4 1447.4 1222.2 1448.5 1230.1 1449.7 1226.1 1450.6 1231.9 1451.9 1222.7 1453.0 1231.7 1454.1 1222.3 1455.3 1232.2 1456.4 1223.6 1457.5 1231.2 1458.3 1228.9 1459.2 1227.2 1460.2 1225.6 1461.0 1225.4 1461.8 1228.0 1462.9 1225.0 1463.9 1224.8 1465.0 1231.9 1466.0 1225.2 1467.2 1225.8 1468.1 1224.2 1469.0 1227.8 1470.1 1225.0 1471.3 1225.7 1472.2 1222.1 1473.1 1226.4 1474.1 1222.9 1475.2 1229.8 1476.0 1222.2 1477.2 1231.2 1478.2 1227.3 1479.3 1232.7 1480.4 1226.6 1481.3 1232.1 1482.3 1226.6 1483.5 1226.3 1484.7 1225.6 1485.6 1232.2 1486.6 1224.8 1487.4 1226.3 1488.3 1226.8 1489.4 1227.3 1490.2 1225.8 1491.3 1224.9 1492.4 1225.8 1493.6 1229.9 1494.6 1226.6 1495.8 1225.1 1496.7 1226.1 1498.0 1231.5 1498.9 1225.9 1499.8 1231.3 1500.7 1226.5 1501.8 1230.5 1502.9 1223.2 1504.1 1226.5 1505.0 1223.1 1506.2 1232.0 1507.0 1226.6 1508.2 1226.8 1509.3 1228.7 1510.4 1232.9 1511.6 1222.7 1512.5 1232.1 1513.4 1224.0 1514.4 1226.5 1515.3 1223.1 1516.3 1226.0 1517.4 1228.4 1518.5 1226.5 1519.6 1224.2 1520.6 1229.4 1521.6 1224.0 1522.4 1229.0 1523.4 1222.3 1524.2 1232.8 1525.1 1225.7 1526.3 1228.9 1527.2 1223.8 1528.2 1231.2 1529.0 1223.1 1530.0 1229.8 1530.9 1224.1 1532.0 1230.2 1532.8 1222.7 1534.0 1229.6 1535.0 1223.5 1536.2 1229.6 1537.2 1225.3 1538.2 1232.9 1539.4 1224.8 1540.2 1229.7 1541.4 1222.7 1542.3 1229.1 1543.3 1227.4 1544.2 1230.9 1545.4 1226.8 1546.3 1231.1 1547.2 1225.2 1548.0 1225.1 1549.2 1223.4 1550.1 1229.5 1551.0 1222.7 1552.0 1225.8 1553.1 1228.3 1554.0 1229.5 1555.3 1223.9 1556.1 1228.0 1557.2 1228.3 1558.3 1229.5 1559.5 1225.0 1560.5 1232.8 1561.5 1224.4 1562.4 1232.1 1563.7 1226.6 1564.6 1229.8 1565.8 1226.2 1566.7 1230.8 1567.7 1222.9 1568.7 1225.1 1569.5 1225.6 1570.5 1226.0 1571.4 1225.9 1572.5 1225.6 1573.6 1226.0 1574.4 1229.7 1575.5 1225.4 1576.6 1226.4 1577.4 1225.9 1578.2 1230.1 1579.2 1222.5 1580.4 1226.2 1581.6 1222.5 1582.5 1225.6 1583.6 1222.6 1584.7 1228.6 1585.8 1225.0 1586.6 1229.0 1587.7 1225.7 1588.8 1230.2 1589.6 1228.0 1590.7 1231.0 1591.8 1224.8 1592.9 1229.8 1593.8 1226.1 1594.6 1227.8 1595.7 1224.8 1596.5 1231.0 1597.6 1225.4 1598.5 1230.0 1599.6 1225.2 1600.5 1229.2 1601.5 1225.6 1602.6 1224.8 1603.4 1223.1 1604.4 1229.8 1605.4 1226.0 1606.6 1225.9 1607.6 1224.1 1608.4 1231.6 1609.3 1228.7 1610.4 1225.3 1611.3 1225.9 1612.2 1229.8 1613.4 1222.5 1614.4 1230.4 1615.5 1224.4 1616.6 1232.4 1617.4 1227.8 1618.3 1228.3 1619.3 1225.7 1620.1 1228.1 1621.0 1225.5 1621.9 1232.5 1622.8 1224.7 1623.7 1225.9 1624.9 1228.3 1626.2 1225.5 1627.2 1224.3 1628.2 1229.8 1629.4 1224.2 1630.3 1232.7 1631.3 1223.1 1632.2 1231.9 1633.1 1225.7 1634.1 1230.1 1635.2 1225.4 1636.4 1229.9 1637.5 1223.3 1638.5 1230.8 1639.4 1226.4 1640.5 1225.6 1641.4 1222.3 1642.5 1232.6 1643.4 1223.1 1644.6 1224.9 1645.7 1224.5 1646.9 1228.4 1648.1 1222.1 1649.3 1229.8 1650.1 1226.8 1651.0 1230.6 1652.0 1224.9 1653.0 1232.6 1654.1 1227.8 1654.9 1227.1 1656.0 1225.4 1657.3 1230.3 1658.4 1223.0 1659.3 1227.4 1660.3 1225.3 1661.3 1233.0 1662.5 1222.2 1663.5 1225.9 1664.6 1223.8 1665.8 1231.6 1667.0 1222.1 1668.2 1224.4 1669.1 1225.0 1670.3 1232.4 1671.5 1227.3 1672.3 1227.7 1673.2 1225.7 1674.2 1228.3 1675.2 1226.0 1676.0 1227.4 1676.9 1223.4 1677.9 1229.7 1679.1 1228.6 1680.0 1232.5 1680.9 1225.8 1681.9 1227.5 1683.0 1225.9 1684.1 1230.1 1685.2 1223.9 1686.1 1232.0 1687.0 1226.1 1687.9 1230.9 1689.0 1222.6 1690.0 1228.0 1691.1 1224.3 1691.9 1227.2 1692.7 1223.0 1693.9 1225.6 1694.8 1222.7 1695.6 1229.4 1696.7 1227.1 1697.5 1215.7 1698.6 1228.7 1699.7 1229.9 1700.8 1224.6 1701.7 1225.8 1702.9 1222.5 1703.8 1232.6 1704.6 1225.4 1705.6 1229.6 1706.4 1222.1 1707.3 1227.3 1708.5 1223.8 1709.6 1231.4 1710.8 1226.6 1711.8 1226.6 1713.0 1224.3 1714.3 1231.2 1715.1 1226.1 1716.1 1226.7 1717.0 1226.8 1718.0 1230.5 1718.9 1225.8 1720.0 1230.1 1721.0 1225.2 1722.2 1231.2 1723.1 1228.0 1724.2 1232.0 1725.1 1223.5 1726.3 1231.3 1727.2 1228.0 1728.4 1229.1 1729.6 1224.5 1730.7 1225.6 1731.6 1224.0 1732.6 1231.5 1733.8 1221.9 1734.9 1226.8 1735.9 1222.3 1736.9 1228.5 1737.7 1228.4 1738.8 1226.3 1740.0 1225.0 1741.0 1227.6 1742.0 1222.1 1743.2 1232.4 1744.1 1223.8 1744.9 1230.0 1745.8 1221.9 1746.8 1232.5 1747.8 1224.0 1748.9 1227.4 1750.1 1225.8 1751.1 1228.3 1752.0 1227.6 1753.1 1224.7 1754.0 1224.0 1755.2 1232.5 1756.1 1221.9 1756.9 1230.3 1758.1 1225.2 1759.2 1228.0 1760.0 1224.2 1760.8 1227.2 1761.8 1225.6 1762.7 1229.3 1763.8 1223.0 1764.7 1229.5 1765.5 1224.4 1766.7 1230.5 1767.6 1225.8 1768.7 1225.0 1769.9 1225.6 1770.7 1230.3 1771.9 1227.3 1772.9 1230.8 1773.9 1228.8 1775.0 1228.5 1776.1 1222.4 1777.2 1231.2 1778.4 1223.1 1779.6 1232.2 1780.5 1226.1 1781.5 1229.5 1782.5 1224.7 1783.7 1231.9 1784.8 1223.0 1785.6 1229.5 1786.8 1222.6 1787.8 1227.8 1788.8 1225.7 1789.8 1232.7 1791.0 1227.2 1791.8 1227.2 1792.8 1225.6 1793.8 1231.4 1794.7 1223.6 1795.6 1228.0 1796.6 1225.7 1797.5 1232.8 1798.7 1223.5 1799.5 1225.9 1800.7 1225.6 1801.7 1230.2 1802.8 1224.7 1803.8 1230.5 1804.9 1225.8 1806.0 1229.5 1807.2 1226.7 1808.3 1229.5 1809.3 1225.9 1810.3 1232.6 1811.3 1228.8 1812.3 1229.6 1813.3 1229.1 1814.3 1226.7 1815.3 1224.6 1816.4 1226.6 1817.4 1225.0 1818.4 1230.4 1819.5 1222.4 1820.4 1225.1 1821.2 1222.5 1822.4 1231.3 1823.5 1227.5 1824.5 1231.0 1825.6 1224.9 1826.7 1227.0 1827.6 1224.8 1828.8 1229.4 1829.8 1222.7 1830.9 1230.2 1831.8 1223.5 1832.8 1229.4 1833.9 1225.9 1835.1 1229.2 1836.2 1226.0 1837.4 1231.5 1838.2 1226.1 1839.2 1231.5 1840.4 1224.7 1841.5 1231.1 1842.7 1224.4 1843.8 1229.9 1844.6 1221.8 1845.8 1228.8 1847.0 1223.3 1848.0 1232.6 1849.0 1224.8 1849.8 1224.5 1851.0 1224.6 1852.2 1232.1 1853.2 1223.1 1854.5 1226.9 1855.4 1222.9 1856.6 1231.9 1857.5 1222.8 1858.6 1226.8 1859.7 1222.9 1860.8 1233.0 1861.8 1221.9 1862.7 1232.9 1863.5 1225.0 1864.8 1225.1 1865.9 1222.3 1866.9 1230.0 1868.0 1223.9 1869.1 1231.0 1870.0 1229.0 1870.9 1230.1 1871.9 1222.8 1873.1 1231.4 1874.0 1223.7 1875.0 1231.5 1875.9 1229.1 1876.8 1225.1 1877.9 1227.6 1878.9 1229.5 1879.9 1223.3 1880.9 1225.5 1881.8 1223.1 1883.0 1230.0 1884.0 1224.4 1885.1 1224.3 1886.1 1223.4 1887.3 1228.4 1888.5 1228.1 1889.4 1227.1 1890.6 1224.2 1891.9 1231.5 1893.0 1222.8 1894.1 1231.0 1895.1 1224.4 1896.0 1232.4 1897.2 1227.0 1898.3 1230.7 1899.2 1224.2 1900.3 1233.0 1901.3 1227.6 1902.5 1227.6 1903.7 1222.1 1904.8 1230.4 1905.7 1224.4 1906.9 1225.4 1907.9 1222.6 1908.8 1227.7 1909.9 1229.1 1910.9 1230.7 1911.9 1223.6 1913.1 1227.7 1914.1 1222.0 1914.9 1229.0" fill="none" stroke="#6ab158" stroke-width="1.25" stroke-linejoin="miter"/>
<line x1="85" y1="1233.4" x2="1915" y2="1233.4" stroke="#e8702c" stroke-width="1.6"/>
<line x1="85" y1="1235.1" x2="1915" y2="1235.1" stroke="#a9b9c2" stroke-width="1"/>
<polygon points="885.1,1234 886.4,1084.6 887.7,1234" fill="#3a3ae6"/>
<line x1="886.4" y1="1084.6" x2="886.4" y2="1234" stroke="#4444ee" stroke-width="1.2"/>
<polygon points="901.1,1234 902.4,1084.6 903.7,1234" fill="#3a3ae6"/>
<line x1="902.4" y1="1084.6" x2="902.4" y2="1234" stroke="#4444ee" stroke-width="1.2"/>
<polygon points="1075.0,1234 1076.3,1084.6 1077.6,1234" fill="#3a3ae6"/>
<line x1="1076.3" y1="1084.6" x2="1076.3" y2="1234" stroke="#4444ee" stroke-width="1.2"/>
<polygon points="1133.0,1234 1134.3,1084.6 1135.6,1234" fill="#3a3ae6"/>
<line x1="1134.3" y1="1084.6" x2="1134.3" y2="1234" stroke="#4444ee" stroke-width="1.2"/>
<polygon points="1242.0,1234 1243.3,1084.6 1244.6,1234" fill="#3a3ae6"/>
<line x1="1243.3" y1="1084.6" x2="1243.3" y2="1234" stroke="#4444ee" stroke-width="1.2"/>
<polygon points="1656.9,1234 1658.2,1084.6 1659.5,1234" fill="#3a3ae6"/>
<line x1="1658.2" y1="1084.6" x2="1658.2" y2="1234" stroke="#4444ee" stroke-width="1.2"/>
<polygon points="1567.3,1234 1568.6,1084.6 1569.9,1234" fill="#e8702c"/>
<line x1="1568.6" y1="1084.6" x2="1568.6" y2="1234" stroke="#e8702c" stroke-width="1.3"/>
<polyline points="85 1088 86.3 1085 88 1092 89.6 1100 91 1095 92.5 1098 94 1093 96 1095 98 1092 100 1094 102 1090 104 1092 106 1089 108 1090 110 1088.5 112 1089.5 114 1087 116 1089 118 1088 120 1089.5 122 1088 124 1089 126 1089 128 1090 132 1091 140 1091.2 150 1091.5 160 1091 170 1091.5 180 1092.5 190 1092.8 200 1092.3 215 1091.8 230 1091.5 260 1091.2 300 1091 350 1091 400 1091.5 450 1092 480 1092 482 1092.2 488 1091.7 494 1092.2 500 1092.5 506 1091.8 512 1091.7 518 1092.1 524 1092.1 530 1092.3 536 1091.9 542 1092.3 548 1092.6 554 1091.7 560 1091.8 566 1092.6 572 1092.0 578 1092.1 584 1092.1 590 1092.6 596 1092.6 602 1092.0 608 1092.5 614 1091.9 620 1092.3 626 1092.5 632 1092.3 638 1092.4 644 1092.3 650 1092.5 656 1091.9 662 1091.9 668 1092.5 674 1092.4 680 1092.4 686 1092.8 692 1092.4 698 1092.5 704 1092.8 710 1092.3 716 1092.7 722 1092.3 728 1093.0 734 1092.8 740 1092.5 746 1092.7 752 1092.3 758 1092.2 764 1092.5 770 1092.9 776 1093.1 782 1092.5 788 1092.4 794 1093.1 800 1093.1 806 1092.8 812 1092.4 818 1093.0 824 1092.8 830 1092.4 836 1092.4 842 1093.1 848 1092.6 854 1092.9 860 1093.0 866 1093.0 872 1092.8 878 1092.6 884 1092.6 890 1092.7 896 1093.1 902 1093.3 908 1092.8 914 1092.8 920 1093.3 926 1093.3 932 1092.5 938 1092.9 944 1092.7 950 1093.1 956 1093.4 962 1093.1 968 1093.2 974 1093.1 980 1092.8 986 1093.3 992 1093.2 998 1092.7 1004 1093.2 1010 1092.8 1016 1093.4 1022 1093.4 1028 1093.6 1034 1093.3 1040 1092.7 1046 1093.6 1052 1093.4 1058 1093.6 1064 1093.1 1070 1093.4 1076 1093.3 1082 1093.7 1088 1093.4 1094 1093.2 1100 1092.9 1106 1093.0 1112 1093.1 1118 1093.3 1124 1093.7 1130 1093.6 1136 1093.0 1142 1093.9 1148 1093.1 1154 1093.1 1160 1093.3 1166 1093.3 1172 1093.8 1178 1093.7 1184 1093.3 1190 1093.2 1196 1093.5 1202 1093.3 1208 1093.1 1214 1093.9 1220 1093.5 1226 1093.9 1232 1093.8 1238 1093.5 1244 1093.7 1250 1093.9 1256 1093.9 1262 1093.9 1268 1093.6 1274 1093.8 1280 1094.0 1286 1093.8 1292 1093.8 1298 1093.3 1304 1094.0 1310 1093.4 1316 1093.7 1322 1093.4 1328 1094.0 1334 1093.8 1340 1094.1 1346 1094.0 1352 1093.5 1358 1093.6 1364 1093.8 1370 1093.4 1376 1093.4 1382 1093.5 1388 1093.8 1394 1094.3 1400 1093.5 1406 1093.5 1412 1093.9 1418 1094.0 1424 1093.5 1430 1094.0 1436 1094.0 1442 1093.7 1448 1093.7 1454 1094.0 1460 1094.3 1466 1094.2 1472 1094.3 1478 1094.3 1484 1093.7 1490 1094.4 1496 1093.7 1502 1093.8 1508 1094.2 1514 1093.7 1520 1094.4 1526 1094.3 1532 1094.7 1538 1094.5 1544 1094.4 1550 1094.1 1556 1094.0 1562 1094.7 1568 1094.3 1574 1094.8 1580 1094.0 1586 1094.6 1592 1094.7 1598 1093.9 1604 1094.5 1610 1094.4 1616 1094.5 1622 1094.6 1628 1094.1 1634 1094.8 1640 1094.8 1646 1094.0 1652 1094.5 1658 1094.8 1664 1094.9 1670 1094.2 1676 1094.2 1682 1094.7 1688 1094.7 1694 1094.5 1700 1095.0 1706 1094.2 1712 1094.9 1718 1095.1 1724 1094.2 1730 1095.1 1736 1095.1 1742 1094.9 1748 1094.9 1754 1095.1 1760 1095.0 1766 1094.2 1772 1095.0 1778 1094.7 1784 1094.6 1790 1094.4 1796 1094.9 1802 1095.0 1808 1095.2 1814 1095.2 1820 1094.4 1826 1094.4 1832 1095.2 1838 1094.8 1844 1094.5 1850 1094.9 1856 1094.4 1862 1094.8 1868 1095.1 1874 1094.8 1880 1094.8 1886 1095.3 1892 1095.4 1898 1095.3 1904 1094.8 1910 1094.9 1915 1095" fill="none" stroke="#4fa59c" stroke-width="1.5"/>
<path d="M85.0 971.2 L86.0 962.3 L86.9 966.8 L87.9 971.2 L88.8 971.2 L89.8 971.2 L90.7 962.3 L91.7 966.8 L92.6 966.8 L93.6 966.8 L94.5 971.2 L95.5 971.2 L96.4 966.8 L97.4 971.2 L98.3 971.2 L99.3 966.8 L100.2 971.2 L101.2 962.3 L102.1 971.2 L103.1 975.7 L104.0 971.2 L105.0 971.2 L105.9 962.3 L106.9 975.7 L107.8 966.8 L108.8 966.8 L109.7 971.2 L110.7 966.8 L111.6 971.2 L112.6 966.8 L113.5 971.2 L114.5 966.8 L115.4 966.8 L116.4 971.2 L117.3 971.2 L118.3 966.8 L119.3 971.2 L120.2 966.8 L121.2 971.2 L122.1 966.8 L123.1 966.8 L124.0 966.8 L125.0 971.2 L125.9 971.2 L126.9 971.2 L127.8 966.8 L128.8 962.3 L129.7 971.2 L130.7 966.8 L131.6 971.2 L132.6 971.2 L133.5 962.3 L134.5 966.8 L135.4 971.2 L136.4 966.8 L137.3 966.8 L138.3 966.8 L139.2 971.2 L140.2 971.2 L141.1 971.2 L142.1 971.2 L143.0 966.8 L144.0 966.8 L144.9 966.8 L145.9 962.3 L146.8 971.2 L147.8 966.8 L148.7 962.3 L149.7 971.2 L150.6 971.2 L151.6 971.2 L152.5 971.2 L153.5 966.8 L154.5 966.8 L155.4 971.2 L156.4 971.2 L157.3 966.8 L158.3 966.8 L159.2 966.8 L160.2 962.3 L161.1 971.2 L162.1 966.8 L163.0 971.2 L164.0 966.8 L164.9 966.8 L165.9 966.8 L166.8 971.2 L167.8 971.2 L168.7 966.8 L169.7 975.7 L170.6 980.1 L171.6 962.3 L172.5 971.2 L173.5 971.2 L174.4 966.8 L175.4 966.8 L176.3 971.2 L177.3 966.8 L178.2 971.2 L179.2 966.8 L180.1 966.8 L181.1 966.8 L182.0 975.7 L183.0 966.8 L183.9 971.2 L184.9 971.2 L185.8 962.3 L186.8 966.8 L187.8 966.8 L188.7 971.2 L189.7 966.8 L190.6 966.8 L191.6 966.8 L192.5 971.2 L193.5 971.2 L194.4 966.8 L195.4 971.2 L196.3 962.3 L197.3 975.7 L198.2 971.2 L199.2 971.2 L200.1 966.8 L201.1 966.8 L202.0 966.8 L203.0 966.8 L203.9 971.2 L204.9 962.3 L205.8 971.2 L206.8 975.7 L207.7 971.2 L208.7 966.8 L209.6 962.3 L210.6 966.8 L211.5 971.2 L212.5 966.8 L213.4 971.2 L214.4 971.2 L215.3 966.8 L216.3 966.8 L217.2 971.2 L218.2 966.8 L219.1 971.2 L220.1 966.8 L221.1 971.2 L222.0 966.8 L223.0 971.2 L223.9 966.8 L224.9 971.2 L225.8 966.8 L226.8 962.3 L227.7 966.8 L228.7 966.8 L229.6 971.2 L230.6 971.2 L231.5 971.2 L232.5 971.2 L233.4 971.2 L234.4 971.2 L235.3 966.8 L236.3 971.2 L237.2 971.2 L238.2 971.2 L239.1 971.2 L240.1 966.8 L241.0 962.3 L242.0 966.8 L242.9 971.2 L243.9 971.2 L244.8 966.8 L245.8 971.2 L246.7 971.2 L247.7 966.8 L248.6 971.2 L249.6 971.2 L250.5 966.8 L251.5 971.2 L252.4 971.2 L253.4 971.2 L254.3 966.8 L255.3 971.2 L256.3 971.2 L257.2 971.2 L258.2 966.8 L259.1 966.8 L260.1 980.1 L261.0 966.8 L262.0 962.3 L262.9 971.2 L263.9 966.8 L264.8 966.8 L265.8 966.8 L266.7 971.2 L267.7 966.8 L268.6 966.8 L269.6 966.8 L270.5 962.3 L271.5 971.2 L272.4 966.8 L273.4 966.8 L274.3 962.3 L275.3 971.2 L276.2 971.2 L277.2 966.8 L278.1 971.2 L279.1 971.2 L280.0 966.8 L281.0 971.2 L281.9 966.8 L282.9 971.2 L283.8 971.2 L284.8 966.8 L285.7 971.2 L286.7 966.8 L287.6 966.8 L288.6 971.2 L289.6 966.8 L290.5 966.8 L291.5 971.2 L292.4 971.2 L293.4 966.8 L294.3 962.3 L295.3 966.8 L296.2 966.8 L297.2 966.8 L298.1 966.8 L299.1 966.8 L300.0 966.8 L301.0 966.8 L301.9 966.8 L302.9 971.2 L303.8 966.8 L304.8 971.2 L305.7 966.8 L306.7 971.2 L307.6 962.3 L308.6 971.2 L309.5 966.8 L310.5 966.8 L311.4 966.8 L312.4 966.8 L313.3 971.2 L314.3 971.2 L315.2 971.2 L316.2 962.3 L317.1 975.7 L318.1 962.3 L319.0 971.2 L320.0 971.2 L320.9 971.2 L321.9 966.8 L322.9 966.8 L323.8 971.2 L324.8 971.2 L325.7 971.2 L326.7 966.8 L327.6 966.8 L328.6 975.7 L329.5 966.8 L330.5 971.2 L331.4 971.2 L332.4 971.2 L333.3 966.8 L334.3 971.2 L335.2 971.2 L336.2 971.2 L337.1 971.2 L338.1 971.2 L339.0 962.3 L340.0 975.7 L340.9 971.2 L341.9 971.2 L342.8 966.8 L343.8 966.8 L344.7 962.3 L345.7 966.8 L346.6 966.8 L347.6 971.2 L348.5 966.8 L349.5 966.8 L350.4 971.2 L351.4 962.3 L352.3 971.2 L353.3 966.8 L354.2 966.8 L355.2 971.2 L356.1 962.3 L357.1 966.8 L358.1 966.8 L359.0 971.2 L360.0 966.8 L360.9 966.8 L361.9 971.2 L362.8 971.2 L363.8 962.3 L364.7 966.8 L365.7 966.8 L366.6 966.8 L367.6 975.7 L368.5 962.3 L369.5 971.2 L370.4 962.3 L371.4 971.2 L372.3 971.2 L373.3 971.2 L374.2 966.8 L375.2 962.3 L376.1 966.8 L377.1 962.3 L378.0 966.8 L379.0 966.8 L379.9 966.8 L380.9 962.3 L381.8 966.8 L382.8 966.8 L383.7 971.2 L384.7 966.8 L385.6 971.2 L386.6 971.2 L387.5 971.2 L388.5 966.8 L389.4 971.2 L390.4 966.8 L391.4 962.3 L392.3 966.8 L393.3 962.3 L394.2 966.8 L395.2 962.3 L396.1 971.2 L397.1 971.2 L398.0 966.8 L399.0 966.8 L399.9 966.8 L400.9 971.2 L401.8 966.8 L402.8 966.8 L403.7 966.8 L404.7 962.3 L405.6 966.8 L406.6 962.3 L407.5 971.2 L408.5 971.2 L409.4 971.2 L410.4 966.8 L411.3 971.2 L412.3 971.2 L413.2 971.2 L414.2 966.8 L415.1 966.8 L416.1 966.8 L417.0 966.8 L418.0 971.2 L418.9 971.2 L419.9 971.2 L420.8 971.2 L421.8 971.2 L422.7 971.2 L423.7 971.2 L424.7 971.2 L425.6 971.2 L426.6 971.2 L427.5 966.8 L428.5 966.8 L429.4 966.8 L430.4 966.8 L431.3 966.8 L432.3 966.8 L433.2 962.3 L434.2 971.2 L435.1 971.2 L436.1 966.8 L437.0 971.2 L438.0 962.3 L438.9 971.2 L439.9 975.7 L440.8 966.8 L441.8 971.2 L442.7 966.8 L443.7 966.8 L444.6 962.3 L445.6 971.2 L446.5 966.8 L447.5 975.7 L448.4 971.2 L449.4 966.8 L450.3 971.2 L451.3 966.8 L452.2 971.2 L453.2 971.2 L454.1 966.8 L455.1 966.8 L456.0 966.8 L457.0 971.2 L458.0 966.8 L458.9 971.2 L459.9 966.8 L460.8 971.2 L461.8 971.2 L462.7 971.2 L463.7 966.8 L464.6 966.8 L465.6 966.8 L466.5 971.2 L467.5 966.8 L468.4 971.2 L469.4 962.3 L470.3 966.8 L471.3 962.3 L472.2 975.7 L473.2 966.8 L474.1 966.8 L475.1 971.2 L476.0 971.2 L477.0 966.8 L477.9 966.8 L478.9 966.8 L479.8 971.2 L480.8 971.2 L481.7 966.8 L482.7 966.8 L483.6 971.2 L484.6 971.2 L485.5 966.8 L486.5 971.2 L487.4 971.2 L488.4 966.8 L489.3 971.2 L490.3 962.3 L491.2 975.7 L492.2 966.8 L493.2 971.2 L494.1 971.2 L495.1 966.8 L496.0 971.2 L497.0 966.8 L497.9 966.8 L498.9 971.2 L499.8 971.2 L500.8 971.2 L501.7 971.2 L502.7 971.2 L503.6 966.8 L504.6 966.8 L505.5 966.8 L506.5 962.3 L507.4 971.2 L508.4 966.8 L509.3 966.8 L510.3 971.2 L511.2 971.2 L512.2 966.8 L513.1 971.2 L514.1 966.8 L515.0 971.2 L516.0 975.7 L516.9 971.2 L517.9 966.8 L518.8 966.8 L519.8 971.2 L520.7 971.2 L521.7 966.8 L522.6 975.7 L523.6 971.2 L524.5 966.8 L525.5 966.8 L526.5 971.2 L527.4 971.2 L528.4 971.2 L529.3 971.2 L530.3 971.2 L531.2 971.2 L532.2 971.2 L533.1 971.2 L534.1 971.2 L535.0 962.3 L536.0 971.2 L536.9 966.8 L537.9 962.3 L538.8 971.2 L539.8 966.8 L540.7 966.8 L541.7 971.2 L542.6 962.3 L543.6 975.7 L544.5 971.2 L545.5 962.3 L546.4 966.8 L547.4 966.8 L548.3 966.8 L549.3 962.3 L550.2 971.2 L551.2 962.3 L552.1 966.8 L553.1 966.8 L554.0 971.2 L555.0 971.2 L555.9 971.2 L556.9 966.8 L557.8 971.2 L558.8 962.3 L559.8 966.8 L560.7 966.8 L561.7 966.8 L562.6 975.7 L563.6 966.8 L564.5 962.3 L565.5 971.2 L566.4 966.8 L567.4 966.8 L568.3 966.8 L569.3 971.2 L570.2 971.2 L571.2 966.8 L572.1 971.2 L573.1 966.8 L574.0 971.2 L575.0 971.2 L575.9 971.2 L576.9 975.7 L577.8 962.3 L578.8 975.7 L579.7 966.8 L580.7 966.8 L581.6 971.2 L582.6 966.8 L583.5 971.2 L584.5 962.3 L585.4 966.8 L586.4 966.8 L587.3 971.2 L588.3 966.8 L589.2 962.3 L590.2 966.8 L591.1 966.8 L592.1 971.2 L593.0 966.8 L594.0 971.2 L595.0 962.3 L595.9 966.8 L596.9 971.2 L597.8 966.8 L598.8 962.3 L599.7 966.8 L600.7 962.3 L601.6 971.2 L602.6 966.8 L603.5 962.3 L604.5 966.8 L605.4 975.7 L606.4 971.2 L607.3 966.8 L608.3 966.8 L609.2 971.2 L610.2 971.2 L611.1 966.8 L612.1 971.2 L613.0 966.8 L614.0 966.8 L614.9 966.8 L615.9 966.8 L616.8 966.8 L617.8 971.2 L618.7 971.2 L619.7 962.3 L620.6 971.2 L621.6 966.8 L622.5 962.3 L623.5 975.7 L624.4 966.8 L625.4 966.8 L626.3 962.3 L627.3 975.7 L628.3 966.8 L629.2 971.2 L630.2 962.3 L631.1 966.8 L632.1 962.3 L633.0 971.2 L634.0 962.3 L634.9 971.2 L635.9 971.2 L636.8 966.8 L637.8 971.2 L638.7 962.3 L639.7 971.2 L640.6 962.3 L641.6 971.2 L642.5 971.2 L643.5 962.3 L644.4 966.8 L645.4 966.8 L646.3 971.2 L647.3 971.2 L648.2 971.2 L649.2 966.8 L650.1 966.8 L651.1 971.2 L652.0 962.3 L653.0 966.8 L653.9 966.8 L654.9 966.8 L655.8 971.2 L656.8 966.8 L657.7 975.7 L658.7 962.3 L659.6 966.8 L660.6 966.8 L661.6 966.8 L662.5 966.8 L663.5 966.8 L664.4 971.2 L665.4 971.2 L666.3 966.8 L667.3 966.8 L668.2 971.2 L669.2 971.2 L670.1 971.2 L671.1 971.2 L672.0 971.2 L673.0 971.2 L673.9 971.2 L674.9 971.2 L675.8 971.2 L676.8 971.2 L677.7 966.8 L678.7 971.2 L679.6 971.2 L680.6 966.8 L681.5 971.2 L682.5 971.2 L683.4 966.8 L684.4 962.3 L685.3 971.2 L686.3 971.2 L687.2 966.8 L688.2 971.2 L689.1 971.2 L690.1 966.8 L691.0 966.8 L692.0 966.8 L692.9 962.3 L693.9 966.8 L694.8 971.2 L695.8 966.8 L696.8 966.8 L697.7 966.8 L698.7 966.8 L699.6 966.8 L700.6 966.8 L701.5 971.2 L702.5 966.8 L703.4 966.8 L704.4 971.2 L705.3 971.2 L706.3 966.8 L707.2 966.8 L708.2 966.8 L709.1 966.8 L710.1 971.2 L711.0 971.2 L712.0 962.3 L712.9 971.2 L713.9 971.2 L714.8 971.2 L715.8 966.8 L716.7 971.2 L717.7 966.8 L718.6 971.2 L719.6 966.8 L720.5 962.3 L721.5 966.8 L722.4 971.2 L723.4 971.2 L724.3 966.8 L725.3 966.8 L726.2 971.2 L727.2 971.2 L728.1 966.8 L729.1 971.2 L730.1 966.8 L731.0 971.2 L732.0 971.2 L732.9 975.7 L733.9 971.2 L734.8 975.7 L735.8 962.3 L736.7 971.2 L737.7 966.8 L738.6 966.8 L739.6 966.8 L740.5 971.2 L741.5 971.2 L742.4 966.8 L743.4 966.8 L744.3 966.8 L745.3 971.2 L746.2 971.2 L747.2 966.8 L748.1 971.2 L749.1 971.2 L750.0 966.8 L751.0 966.8 L751.9 975.7 L752.9 971.2 L753.8 966.8 L754.8 975.7 L755.7 971.2 L756.7 966.8 L757.6 966.8 L758.6 971.2 L759.5 962.3 L760.5 971.2 L761.4 971.2 L762.4 971.2 L763.4 971.2 L764.3 966.8 L765.3 966.8 L766.2 971.2 L767.2 962.3 L768.1 971.2 L769.1 966.8 L770.0 966.8 L771.0 971.2 L771.9 966.8 L772.9 980.1 L773.8 971.2 L774.8 962.3 L775.7 971.2 L776.7 966.8 L777.6 971.2 L778.6 971.2 L779.5 966.8 L780.5 966.8 L781.4 966.8 L782.4 966.8 L783.3 971.2 L784.3 966.8 L785.2 971.2 L786.2 966.8 L787.1 971.2 L788.1 966.8 L789.0 971.2 L790.0 971.2 L790.9 971.2 L791.9 966.8 L792.8 962.3 L793.8 975.7 L794.7 971.2 L795.7 971.2 L796.6 962.3 L797.6 975.7 L798.6 962.3 L799.5 975.7 L800.5 971.2 L801.4 971.2 L802.4 971.2 L803.3 966.8 L804.3 966.8 L805.2 966.8 L806.2 975.7 L807.1 966.8 L808.1 962.3 L809.0 971.2 L810.0 966.8 L810.9 966.8 L811.9 971.2 L812.8 971.2 L813.8 971.2 L814.7 966.8 L815.7 962.3 L816.6 975.7 L817.6 966.8 L818.5 971.2 L819.5 966.8 L820.4 966.8 L821.4 966.8 L822.3 966.8 L823.3 975.7 L824.2 966.8 L825.2 971.2 L826.1 971.2 L827.1 971.2 L828.0 971.2 L829.0 971.2 L829.9 971.2 L830.9 966.8 L831.9 971.2 L832.8 971.2 L833.8 962.3 L834.7 966.8 L835.7 971.2 L836.6 966.8 L837.6 966.8 L838.5 971.2 L839.5 966.8 L840.4 966.8 L841.4 971.2 L842.3 971.2 L843.3 966.8 L844.2 962.3 L845.2 966.8 L846.1 966.8 L847.1 971.2 L848.0 971.2 L849.0 966.8 L849.9 971.2 L850.9 971.2 L851.8 962.3 L852.8 966.8 L853.7 971.2 L854.7 962.3 L855.6 971.2 L856.6 971.2 L857.5 971.2 L858.5 971.2 L859.4 971.2 L860.4 966.8 L861.3 962.3 L862.3 971.2 L863.2 971.2 L864.2 966.8 L865.2 971.2 L866.1 971.2 L867.1 971.2 L868.0 971.2 L869.0 966.8 L869.9 962.3 L870.9 971.2 L871.8 962.3 L872.8 971.2 L873.7 971.2 L874.7 966.8 L875.6 971.2 L876.6 966.8 L877.5 971.2 L878.5 971.2 L879.4 966.8 L880.4 966.8 L881.3 962.3 L882.3 975.7 L883.2 971.2 L884.2 971.2 L885.1 971.2 L886.1 966.8 L887.0 962.3 L888.0 971.2 L888.9 962.3 L889.9 971.2 L890.8 966.8 L891.8 966.8 L892.7 966.8 L893.7 971.2 L894.6 971.2 L895.6 971.2 L896.5 966.8 L897.5 971.2 L898.4 971.2 L899.4 962.3 L900.4 971.2 L901.3 966.8 L902.3 966.8 L903.2 971.2 L904.2 966.8 L905.1 966.8 L906.1 966.8 L907.0 962.3 L908.0 971.2 L908.9 971.2 L909.9 966.8 L910.8 966.8 L911.8 966.8 L912.7 971.2 L913.7 966.8 L914.6 966.8 L915.6 966.8 L916.5 971.2 L917.5 966.8 L918.4 971.2 L919.4 966.8 L920.3 971.2 L921.3 966.8 L922.2 971.2 L923.2 971.2 L924.1 966.8 L925.1 966.8 L926.0 971.2 L927.0 962.3 L927.9 966.8 L928.9 975.7 L929.8 971.2 L930.8 962.3 L931.7 966.8 L932.7 966.8 L933.7 971.2 L934.6 966.8 L935.6 966.8 L936.5 971.2 L937.5 971.2 L938.4 971.2 L939.4 966.8 L940.3 971.2 L941.3 971.2 L942.2 962.3 L943.2 971.2 L944.1 966.8 L945.1 966.8 L946.0 966.8 L947.0 966.8 L947.9 966.8 L948.9 971.2 L949.8 966.8 L950.8 966.8 L951.7 971.2 L952.7 962.3 L953.6 971.2 L954.6 971.2 L955.5 971.2 L956.5 962.3 L957.4 975.7 L958.4 971.2 L959.3 966.8 L960.3 966.8 L961.2 966.8 L962.2 962.3 L963.1 971.2 L964.1 971.2 L965.0 966.8 L966.0 966.8 L967.0 971.2 L967.9 971.2 L968.9 971.2 L969.8 971.2 L970.8 966.8 L971.7 971.2 L972.7 962.3 L973.6 971.2 L974.6 971.2 L975.5 971.2 L976.5 966.8 L977.4 971.2 L978.4 971.2 L979.3 966.8 L980.3 966.8 L981.2 966.8 L982.2 966.8 L983.1 971.2 L984.1 966.8 L985.0 971.2 L986.0 966.8 L986.9 966.8 L987.9 966.8 L988.8 975.7 L989.8 971.2 L990.7 962.3 L991.7 966.8 L992.6 966.8 L993.6 971.2 L994.5 971.2 L995.5 966.8 L996.4 971.2 L997.4 962.3 L998.3 971.2 L999.3 971.2 L1000.2 966.8 L1001.2 966.8 L1002.2 971.2 L1003.1 971.2 L1004.1 971.2 L1005.0 966.8 L1006.0 966.8 L1006.9 971.2 L1007.9 971.2 L1008.8 962.3 L1009.8 966.8 L1010.7 966.8 L1011.7 971.2 L1012.6 971.2 L1013.6 962.3 L1014.5 966.8 L1015.5 966.8 L1016.4 971.2 L1017.4 966.8 L1018.3 962.3 L1019.3 966.8 L1020.2 962.3 L1021.2 966.8 L1022.1 966.8 L1023.1 971.2 L1024.0 971.2 L1025.0 971.2 L1025.9 966.8 L1026.9 971.2 L1027.8 966.8 L1028.8 971.2 L1029.7 962.3 L1030.7 971.2 L1031.6 966.8 L1032.6 966.8 L1033.5 966.8 L1034.5 966.8 L1035.5 971.2 L1036.4 971.2 L1037.4 966.8 L1038.3 962.3 L1039.3 966.8 L1040.2 966.8 L1041.2 971.2 L1042.1 966.8 L1043.1 966.8 L1044.0 966.8 L1045.0 971.2 L1045.9 971.2 L1046.9 966.8 L1047.8 966.8 L1048.8 966.8 L1049.7 971.2 L1050.7 971.2 L1051.6 971.2 L1052.6 971.2 L1053.5 966.8 L1054.5 966.8 L1055.4 962.3 L1056.4 971.2 L1057.3 966.8 L1058.3 971.2 L1059.2 971.2 L1060.2 966.8 L1061.1 966.8 L1062.1 966.8 L1063.0 966.8 L1064.0 966.8 L1064.9 966.8 L1065.9 966.8 L1066.8 962.3 L1067.8 971.2 L1068.8 962.3 L1069.7 966.8 L1070.7 962.3 L1071.6 975.7 L1072.6 966.8 L1073.5 966.8 L1074.5 971.2 L1075.4 971.2 L1076.4 962.3 L1077.3 966.8 L1078.3 966.8 L1079.2 966.8 L1080.2 966.8 L1081.1 971.2 L1082.1 971.2 L1083.0 971.2 L1084.0 975.7 L1084.9 966.8 L1085.9 966.8 L1086.8 971.2 L1087.8 966.8 L1088.7 966.8 L1089.7 966.8 L1090.6 966.8 L1091.6 962.3 L1092.5 971.2 L1093.5 966.8 L1094.4 966.8 L1095.4 971.2 L1096.3 966.8 L1097.3 966.8 L1098.2 971.2 L1099.2 966.8 L1100.1 966.8 L1101.1 966.8 L1102.1 966.8 L1103.0 962.3 L1104.0 966.8 L1104.9 966.8 L1105.9 971.2 L1106.8 971.2 L1107.8 966.8 L1108.7 971.2 L1109.7 971.2 L1110.6 971.2 L1111.6 971.2 L1112.5 971.2 L1113.5 962.3 L1114.4 966.8 L1115.4 971.2 L1116.3 971.2 L1117.3 966.8 L1118.2 966.8 L1119.2 966.8 L1120.1 971.2 L1121.1 975.7 L1122.0 966.8 L1123.0 966.8 L1123.9 971.2 L1124.9 971.2 L1125.8 971.2 L1126.8 966.8 L1127.7 962.3 L1128.7 975.7 L1129.6 971.2 L1130.6 966.8 L1131.5 966.8 L1132.5 971.2 L1133.4 971.2 L1134.4 966.8 L1135.3 971.2 L1136.3 966.8 L1137.3 971.2 L1138.2 962.3 L1139.2 971.2 L1140.1 971.2 L1141.1 966.8 L1142.0 966.8 L1143.0 966.8 L1143.9 962.3 L1144.9 975.7 L1145.8 962.3 L1146.8 966.8 L1147.7 971.2 L1148.7 966.8 L1149.6 962.3 L1150.6 966.8 L1151.5 966.8 L1152.5 971.2 L1153.4 971.2 L1154.4 962.3 L1155.3 971.2 L1156.3 966.8 L1157.2 971.2 L1158.2 971.2 L1159.1 971.2 L1160.1 966.8 L1161.0 966.8 L1162.0 966.8 L1162.9 971.2 L1163.9 971.2 L1164.8 962.3 L1165.8 966.8 L1166.7 966.8 L1167.7 966.8 L1168.6 966.8 L1169.6 966.8 L1170.6 966.8 L1171.5 971.2 L1172.5 971.2 L1173.4 966.8 L1174.4 971.2 L1175.3 962.3 L1176.3 971.2 L1177.2 966.8 L1178.2 966.8 L1179.1 971.2 L1180.1 971.2 L1181.0 962.3 L1182.0 971.2 L1182.9 971.2 L1183.9 966.8 L1184.8 971.2 L1185.8 966.8 L1186.7 971.2 L1187.7 971.2 L1188.6 966.8 L1189.6 966.8 L1190.5 962.3 L1191.5 971.2 L1192.4 966.8 L1193.4 971.2 L1194.3 966.8 L1195.3 966.8 L1196.2 971.2 L1197.2 966.8 L1198.1 966.8 L1199.1 966.8 L1200.0 966.8 L1201.0 971.2 L1201.9 971.2 L1202.9 962.3 L1203.9 971.2 L1204.8 971.2 L1205.8 971.2 L1206.7 966.8 L1207.7 971.2 L1208.6 971.2 L1209.6 966.8 L1210.5 966.8 L1211.5 962.3 L1212.4 966.8 L1213.4 966.8 L1214.3 966.8 L1215.3 966.8 L1216.2 962.3 L1217.2 966.8 L1218.1 971.2 L1219.1 966.8 L1220.0 966.8 L1221.0 962.3 L1221.9 975.7 L1222.9 966.8 L1223.8 966.8 L1224.8 966.8 L1225.7 962.3 L1226.7 971.2 L1227.6 966.8 L1228.6 971.2 L1229.5 971.2 L1230.5 971.2 L1231.4 971.2 L1232.4 966.8 L1233.3 971.2 L1234.3 966.8 L1235.2 966.8 L1236.2 971.2 L1237.1 966.8 L1238.1 975.7 L1239.1 966.8 L1240.0 966.8 L1241.0 971.2 L1241.9 971.2 L1242.9 966.8 L1243.8 966.8 L1244.8 966.8 L1245.7 966.8 L1246.7 971.2 L1247.6 971.2 L1248.6 971.2 L1249.5 971.2 L1250.5 966.8 L1251.4 966.8 L1252.4 966.8 L1253.3 966.8 L1254.3 971.2 L1255.2 971.2 L1256.2 966.8 L1257.1 971.2 L1258.1 971.2 L1259.0 966.8 L1260.0 962.3 L1260.9 971.2 L1261.9 971.2 L1262.8 962.3 L1263.8 971.2 L1264.7 971.2 L1265.7 971.2 L1266.6 966.8 L1267.6 966.8 L1268.5 962.3 L1269.5 966.8 L1270.4 971.2 L1271.4 966.8 L1272.4 966.8 L1273.3 971.2 L1274.3 971.2 L1275.2 962.3 L1276.2 966.8 L1277.1 966.8 L1278.1 971.2 L1279.0 966.8 L1280.0 971.2 L1280.9 971.2 L1281.9 971.2 L1282.8 966.8 L1283.8 971.2 L1284.7 966.8 L1285.7 966.8 L1286.6 971.2 L1287.6 971.2 L1288.5 966.8 L1289.5 966.8 L1290.4 962.3 L1291.4 966.8 L1292.3 962.3 L1293.3 971.2 L1294.2 971.2 L1295.2 971.2 L1296.1 966.8 L1297.1 966.8 L1298.0 966.8 L1299.0 971.2 L1299.9 966.8 L1300.9 971.2 L1301.8 971.2 L1302.8 971.2 L1303.7 971.2 L1304.7 971.2 L1305.7 971.2 L1306.6 971.2 L1307.6 971.2 L1308.5 971.2 L1309.5 966.8 L1310.4 962.3 L1311.4 975.7 L1312.3 966.8 L1313.3 971.2 L1314.2 962.3 L1315.2 966.8 L1316.1 966.8 L1317.1 971.2 L1318.0 962.3 L1319.0 966.8 L1319.9 966.8 L1320.9 966.8 L1321.8 971.2 L1322.8 971.2 L1323.7 971.2 L1324.7 966.8 L1325.6 971.2 L1326.6 966.8 L1327.5 971.2 L1328.5 962.3 L1329.4 971.2 L1330.4 971.2 L1331.3 966.8 L1332.3 966.8 L1333.2 971.2 L1334.2 962.3 L1335.1 971.2 L1336.1 975.7 L1337.0 971.2 L1338.0 966.8 L1338.9 971.2 L1339.9 966.8 L1340.9 971.2 L1341.8 971.2 L1342.8 962.3 L1343.7 971.2 L1344.7 966.8 L1345.6 971.2 L1346.6 971.2 L1347.5 966.8 L1348.5 971.2 L1349.4 966.8 L1350.4 971.2 L1351.3 971.2 L1352.3 966.8 L1353.2 971.2 L1354.2 966.8 L1355.1 966.8 L1356.1 966.8 L1357.0 971.2 L1358.0 971.2 L1358.9 971.2 L1359.9 971.2 L1360.8 971.2 L1361.8 971.2 L1362.7 966.8 L1363.7 971.2 L1364.6 971.2 L1365.6 966.8 L1366.5 966.8 L1367.5 962.3 L1368.4 971.2 L1369.4 971.2 L1370.3 971.2 L1371.3 966.8 L1372.2 966.8 L1373.2 975.7 L1374.2 971.2 L1375.1 962.3 L1376.1 975.7 L1377.0 971.2 L1378.0 971.2 L1378.9 966.8 L1379.9 971.2 L1380.8 966.8 L1381.8 971.2 L1382.7 971.2 L1383.7 966.8 L1384.6 966.8 L1385.6 962.3 L1386.5 966.8 L1387.5 966.8 L1388.4 966.8 L1389.4 966.8 L1390.3 971.2 L1391.3 971.2 L1392.2 971.2 L1393.2 966.8 L1394.1 971.2 L1395.1 966.8 L1396.0 962.3 L1397.0 966.8 L1397.9 966.8 L1398.9 966.8 L1399.8 971.2 L1400.8 971.2 L1401.7 966.8 L1402.7 971.2 L1403.6 966.8 L1404.6 971.2 L1405.5 971.2 L1406.5 962.3 L1407.5 971.2 L1408.4 966.8 L1409.4 966.8 L1410.3 962.3 L1411.3 971.2 L1412.2 971.2 L1413.2 971.2 L1414.1 962.3 L1415.1 966.8 L1416.0 971.2 L1417.0 962.3 L1417.9 971.2 L1418.9 966.8 L1419.8 966.8 L1420.8 971.2 L1421.7 966.8 L1422.7 966.8 L1423.6 971.2 L1424.6 966.8 L1425.5 971.2 L1426.5 966.8 L1427.4 962.3 L1428.4 966.8 L1429.3 971.2 L1430.3 971.2 L1431.2 971.2 L1432.2 966.8 L1433.1 975.7 L1434.1 971.2 L1435.0 966.8 L1436.0 966.8 L1436.9 971.2 L1437.9 962.3 L1438.8 966.8 L1439.8 971.2 L1440.7 966.8 L1441.7 971.2 L1442.7 971.2 L1443.6 971.2 L1444.6 966.8 L1445.5 962.3 L1446.5 966.8 L1447.4 966.8 L1448.4 971.2 L1449.3 971.2 L1450.3 966.8 L1451.2 971.2 L1452.2 966.8 L1453.1 966.8 L1454.1 975.7 L1455.0 971.2 L1456.0 971.2 L1456.9 966.8 L1457.9 962.3 L1458.8 975.7 L1459.8 966.8 L1460.7 966.8 L1461.7 966.8 L1462.6 971.2 L1463.6 962.3 L1464.5 966.8 L1465.5 971.2 L1466.4 966.8 L1467.4 966.8 L1468.3 966.8 L1469.3 971.2 L1470.2 966.8 L1471.2 962.3 L1472.1 975.7 L1473.1 971.2 L1474.0 966.8 L1475.0 966.8 L1476.0 966.8 L1476.9 966.8 L1477.9 971.2 L1478.8 966.8 L1479.8 966.8 L1480.7 962.3 L1481.7 971.2 L1482.6 971.2 L1483.6 971.2 L1484.5 971.2 L1485.5 971.2 L1486.4 966.8 L1487.4 966.8 L1488.3 966.8 L1489.3 971.2 L1490.2 971.2 L1491.2 971.2 L1492.1 971.2 L1493.1 962.3 L1494.0 971.2 L1495.0 971.2 L1495.9 971.2 L1496.9 971.2 L1497.8 966.8 L1498.8 980.1 L1499.7 971.2 L1500.7 966.8 L1501.6 966.8 L1502.6 966.8 L1503.5 971.2 L1504.5 971.2 L1505.4 971.2 L1506.4 971.2 L1507.3 962.3 L1508.3 971.2 L1509.3 962.3 L1510.2 971.2 L1511.2 966.8 L1512.1 971.2 L1513.1 971.2 L1514.0 966.8 L1515.0 971.2 L1515.9 971.2 L1516.9 966.8 L1517.8 966.8 L1518.8 966.8 L1519.7 971.2 L1520.7 971.2 L1521.6 966.8 L1522.6 971.2 L1523.5 966.8 L1524.5 966.8 L1525.4 971.2 L1526.4 971.2 L1527.3 962.3 L1528.3 971.2 L1529.2 971.2 L1530.2 966.8 L1531.1 966.8 L1532.1 966.8 L1533.0 971.2 L1534.0 971.2 L1534.9 971.2 L1535.9 962.3 L1536.8 966.8 L1537.8 966.8 L1538.7 966.8 L1539.7 966.8 L1540.6 966.8 L1541.6 971.2 L1542.5 971.2 L1543.5 971.2 L1544.5 966.8 L1545.4 971.2 L1546.4 966.8 L1547.3 966.8 L1548.3 971.2 L1549.2 966.8 L1550.2 971.2 L1551.1 971.2 L1552.1 971.2 L1553.0 971.2 L1554.0 966.8 L1554.9 962.3 L1555.9 966.8 L1556.8 975.7 L1557.8 971.2 L1558.7 966.8 L1559.7 966.8 L1560.6 966.8 L1561.6 966.8 L1562.5 966.8 L1563.5 971.2 L1564.4 962.3 L1565.4 966.8 L1566.3 971.2 L1567.3 966.8 L1568.2 1006.9 L1569.2 971.2 L1570.1 971.2 L1571.1 962.3 L1572.0 966.8 L1573.0 975.7 L1573.9 962.3 L1574.9 966.8 L1575.8 966.8 L1576.8 962.3 L1577.8 975.7 L1578.7 971.2 L1579.7 966.8 L1580.6 966.8 L1581.6 971.2 L1582.5 971.2 L1583.5 971.2 L1584.4 966.8 L1585.4 971.2 L1586.3 971.2 L1587.3 971.2 L1588.2 962.3 L1589.2 966.8 L1590.1 971.2 L1591.1 962.3 L1592.0 966.8 L1593.0 971.2 L1593.9 966.8 L1594.9 966.8 L1595.8 966.8 L1596.8 971.2 L1597.7 971.2 L1598.7 971.2 L1599.6 971.2 L1600.6 966.8 L1601.5 966.8 L1602.5 971.2 L1603.4 962.3 L1604.4 975.7 L1605.3 971.2 L1606.3 971.2 L1607.2 966.8 L1608.2 962.3 L1609.1 971.2 L1610.1 966.8 L1611.1 966.8 L1612.0 966.8 L1613.0 966.8 L1613.9 966.8 L1614.9 962.3 L1615.8 975.7 L1616.8 966.8 L1617.7 966.8 L1618.7 966.8 L1619.6 962.3 L1620.6 975.7 L1621.5 971.2 L1622.5 971.2 L1623.4 966.8 L1624.4 966.8 L1625.3 966.8 L1626.3 971.2 L1627.2 971.2 L1628.2 966.8 L1629.1 966.8 L1630.1 966.8 L1631.0 971.2 L1632.0 966.8 L1632.9 971.2 L1633.9 966.8 L1634.8 966.8 L1635.8 966.8 L1636.7 966.8 L1637.7 966.8 L1638.6 966.8 L1639.6 971.2 L1640.5 966.8 L1641.5 971.2 L1642.4 966.8 L1643.4 971.2 L1644.4 966.8 L1645.3 966.8 L1646.3 966.8 L1647.2 971.2 L1648.2 971.2 L1649.1 971.2 L1650.1 966.8 L1651.0 966.8 L1652.0 962.3 L1652.9 966.8 L1653.9 966.8 L1654.8 962.3 L1655.8 971.2 L1656.7 966.8 L1657.7 966.8 L1658.6 971.2 L1659.6 971.2 L1660.5 966.8 L1661.5 971.2 L1662.4 962.3 L1663.4 966.8 L1664.3 971.2 L1665.3 966.8 L1666.2 966.8 L1667.2 966.8 L1668.1 971.2 L1669.1 966.8 L1670.0 971.2 L1671.0 971.2 L1671.9 971.2 L1672.9 962.3 L1673.8 971.2 L1674.8 966.8 L1675.7 966.8 L1676.7 966.8 L1677.6 966.8 L1678.6 971.2 L1679.6 962.3 L1680.5 975.7 L1681.5 971.2 L1682.4 962.3 L1683.4 966.8 L1684.3 971.2 L1685.3 966.8 L1686.2 971.2 L1687.2 971.2 L1688.1 966.8 L1689.1 966.8 L1690.0 966.8 L1691.0 962.3 L1691.9 971.2 L1692.9 971.2 L1693.8 971.2 L1694.8 971.2 L1695.7 966.8 L1696.7 971.2 L1697.6 966.8 L1698.6 971.2 L1699.5 966.8 L1700.5 971.2 L1701.4 966.8 L1702.4 966.8 L1703.3 966.8 L1704.3 966.8 L1705.2 962.3 L1706.2 971.2 L1707.1 962.3 L1708.1 971.2 L1709.0 966.8 L1710.0 971.2 L1710.9 966.8 L1711.9 962.3 L1712.9 966.8 L1713.8 966.8 L1714.8 971.2 L1715.7 971.2 L1716.7 966.8 L1717.6 966.8 L1718.6 971.2 L1719.5 971.2 L1720.5 966.8 L1721.4 971.2 L1722.4 966.8 L1723.3 962.3 L1724.3 966.8 L1725.2 971.2 L1726.2 966.8 L1727.1 966.8 L1728.1 971.2 L1729.0 971.2 L1730.0 971.2 L1730.9 966.8 L1731.9 971.2 L1732.8 966.8 L1733.8 966.8 L1734.7 971.2 L1735.7 971.2 L1736.6 975.7 L1737.6 971.2 L1738.5 966.8 L1739.5 971.2 L1740.4 971.2 L1741.4 966.8 L1742.3 962.3 L1743.3 966.8 L1744.2 971.2 L1745.2 966.8 L1746.2 975.7 L1747.1 962.3 L1748.1 975.7 L1749.0 966.8 L1750.0 966.8 L1750.9 966.8 L1751.9 966.8 L1752.8 966.8 L1753.8 971.2 L1754.7 971.2 L1755.7 971.2 L1756.6 966.8 L1757.6 966.8 L1758.5 966.8 L1759.5 971.2 L1760.4 971.2 L1761.4 971.2 L1762.3 966.8 L1763.3 971.2 L1764.2 966.8 L1765.2 971.2 L1766.1 962.3 L1767.1 966.8 L1768.0 966.8 L1769.0 966.8 L1769.9 966.8 L1770.9 966.8 L1771.8 971.2 L1772.8 971.2 L1773.7 971.2 L1774.7 971.2 L1775.6 971.2 L1776.6 966.8 L1777.5 971.2 L1778.5 966.8 L1779.4 966.8 L1780.4 971.2 L1781.4 971.2 L1782.3 971.2 L1783.3 971.2 L1784.2 966.8 L1785.2 971.2 L1786.1 966.8 L1787.1 966.8 L1788.0 971.2 L1789.0 962.3 L1789.9 966.8 L1790.9 966.8 L1791.8 966.8 L1792.8 966.8 L1793.7 966.8 L1794.7 971.2 L1795.6 966.8 L1796.6 966.8 L1797.5 975.7 L1798.5 966.8 L1799.4 971.2 L1800.4 966.8 L1801.3 971.2 L1802.3 966.8 L1803.2 966.8 L1804.2 966.8 L1805.1 966.8 L1806.1 966.8 L1807.0 966.8 L1808.0 966.8 L1808.9 971.2 L1809.9 971.2 L1810.8 966.8 L1811.8 966.8 L1812.7 971.2 L1813.7 962.3 L1814.7 975.7 L1815.6 966.8 L1816.6 962.3 L1817.5 971.2 L1818.5 966.8 L1819.4 966.8 L1820.4 971.2 L1821.3 971.2 L1822.3 966.8 L1823.2 971.2 L1824.2 971.2 L1825.1 966.8 L1826.1 971.2 L1827.0 971.2 L1828.0 971.2 L1828.9 971.2 L1829.9 971.2 L1830.8 966.8 L1831.8 971.2 L1832.7 971.2 L1833.7 966.8 L1834.6 971.2 L1835.6 966.8 L1836.5 966.8 L1837.5 971.2 L1838.4 966.8 L1839.4 971.2 L1840.3 966.8 L1841.3 975.7 L1842.2 971.2 L1843.2 971.2 L1844.1 966.8 L1845.1 966.8 L1846.0 971.2 L1847.0 966.8 L1848.0 966.8 L1848.9 971.2 L1849.9 971.2 L1850.8 971.2 L1851.8 971.2 L1852.7 966.8 L1853.7 962.3 L1854.6 971.2 L1855.6 971.2 L1856.5 962.3 L1857.5 966.8 L1858.4 966.8 L1859.4 966.8 L1860.3 971.2 L1861.3 962.3 L1862.2 966.8 L1863.2 971.2 L1864.1 971.2 L1865.1 966.8 L1866.0 966.8 L1867.0 962.3 L1867.9 966.8 L1868.9 971.2 L1869.8 971.2 L1870.8 966.8 L1871.7 966.8 L1872.7 966.8 L1873.6 971.2 L1874.6 966.8 L1875.5 966.8 L1876.5 966.8 L1877.4 971.2 L1878.4 966.8 L1879.3 962.3 L1880.3 966.8 L1881.2 971.2 L1882.2 962.3 L1883.2 966.8 L1884.1 971.2 L1885.1 971.2 L1886.0 962.3 L1887.0 971.2 L1887.9 962.3 L1888.9 975.7 L1889.8 971.2 L1890.8 971.2 L1891.7 962.3 L1892.7 971.2 L1893.6 966.8 L1894.6 975.7 L1895.5 971.2 L1896.5 966.8 L1897.4 975.7 L1898.4 966.8 L1899.3 962.3 L1900.3 966.8 L1901.2 971.2 L1902.2 962.3 L1903.1 966.8 L1904.1 971.2 L1905.0 971.2 L1906.0 971.2 L1906.9 966.8 L1907.9 966.8 L1908.8 962.3 L1909.8 966.8 L1910.7 971.2 L1911.7 966.8 L1912.6 971.2 L1913.6 966.8 L1914.5 975.7 L1915.5 966.8" fill="none" stroke="#a83eb4" stroke-width="1.5"/>
<path d="M85.0 971.2h0M86.0 962.3h0M86.9 966.8h0M87.9 971.2h0M88.8 971.2h0M89.8 971.2h0M90.7 962.3h0M91.7 966.8h0M92.6 966.8h0M93.6 966.8h0M94.5 971.2h0M95.5 971.2h0M96.4 966.8h0M97.4 971.2h0M98.3 971.2h0M99.3 966.8h0M100.2 971.2h0M101.2 962.3h0M102.1 971.2h0M103.1 975.7h0M104.0 971.2h0M105.0 971.2h0M105.9 962.3h0M106.9 975.7h0M107.8 966.8h0M108.8 966.8h0M109.7 971.2h0M110.7 966.8h0M111.6 971.2h0M112.6 966.8h0M113.5 971.2h0M114.5 966.8h0M115.4 966.8h0M116.4 971.2h0M117.3 971.2h0M118.3 966.8h0M119.3 971.2h0M120.2 966.8h0M121.2 971.2h0M122.1 966.8h0M123.1 966.8h0M124.0 966.8h0M125.0 971.2h0M125.9 971.2h0M126.9 971.2h0M127.8 966.8h0M128.8 962.3h0M129.7 971.2h0M130.7 966.8h0M131.6 971.2h0M132.6 971.2h0M133.5 962.3h0M134.5 966.8h0M135.4 971.2h0M136.4 966.8h0M137.3 966.8h0M138.3 966.8h0M139.2 971.2h0M140.2 971.2h0M141.1 971.2h0M142.1 971.2h0M143.0 966.8h0M144.0 966.8h0M144.9 966.8h0M145.9 962.3h0M146.8 971.2h0M147.8 966.8h0M148.7 962.3h0M149.7 971.2h0M150.6 971.2h0M151.6 971.2h0M152.5 971.2h0M153.5 966.8h0M154.5 966.8h0M155.4 971.2h0M156.4 971.2h0M157.3 966.8h0M158.3 966.8h0M159.2 966.8h0M160.2 962.3h0M161.1 971.2h0M162.1 966.8h0M163.0 971.2h0M164.0 966.8h0M164.9 966.8h0M165.9 966.8h0M166.8 971.2h0M167.8 971.2h0M168.7 966.8h0M169.7 975.7h0M170.6 980.1h0M171.6 962.3h0M172.5 971.2h0M173.5 971.2h0M174.4 966.8h0M175.4 966.8h0M176.3 971.2h0M177.3 966.8h0M178.2 971.2h0M179.2 966.8h0M180.1 966.8h0M181.1 966.8h0M182.0 975.7h0M183.0 966.8h0M183.9 971.2h0M184.9 971.2h0M185.8 962.3h0M186.8 966.8h0M187.8 966.8h0M188.7 971.2h0M189.7 966.8h0M190.6 966.8h0M191.6 966.8h0M192.5 971.2h0M193.5 971.2h0M194.4 966.8h0M195.4 971.2h0M196.3 962.3h0M197.3 975.7h0M198.2 971.2h0M199.2 971.2h0M200.1 966.8h0M201.1 966.8h0M202.0 966.8h0M203.0 966.8h0M203.9 971.2h0M204.9 962.3h0M205.8 971.2h0M206.8 975.7h0M207.7 971.2h0M208.7 966.8h0M209.6 962.3h0M210.6 966.8h0M211.5 971.2h0M212.5 966.8h0M213.4 971.2h0M214.4 971.2h0M215.3 966.8h0M216.3 966.8h0M217.2 971.2h0M218.2 966.8h0M219.1 971.2h0M220.1 966.8h0M221.1 971.2h0M222.0 966.8h0M223.0 971.2h0M223.9 966.8h0M224.9 971.2h0M225.8 966.8h0M226.8 962.3h0M227.7 966.8h0M228.7 966.8h0M229.6 971.2h0M230.6 971.2h0M231.5 971.2h0M232.5 971.2h0M233.4 971.2h0M234.4 971.2h0M235.3 966.8h0M236.3 971.2h0M237.2 971.2h0M238.2 971.2h0M239.1 971.2h0M240.1 966.8h0M241.0 962.3h0M242.0 966.8h0M242.9 971.2h0M243.9 971.2h0M244.8 966.8h0M245.8 971.2h0M246.7 971.2h0M247.7 966.8h0M248.6 971.2h0M249.6 971.2h0M250.5 966.8h0M251.5 971.2h0M252.4 971.2h0M253.4 971.2h0M254.3 966.8h0M255.3 971.2h0M256.3 971.2h0M257.2 971.2h0M258.2 966.8h0M259.1 966.8h0M260.1 980.1h0M261.0 966.8h0M262.0 962.3h0M262.9 971.2h0M263.9 966.8h0M264.8 966.8h0M265.8 966.8h0M266.7 971.2h0M267.7 966.8h0M268.6 966.8h0M269.6 966.8h0M270.5 962.3h0M271.5 971.2h0M272.4 966.8h0M273.4 966.8h0M274.3 962.3h0M275.3 971.2h0M276.2 971.2h0M277.2 966.8h0M278.1 971.2h0M279.1 971.2h0M280.0 966.8h0M281.0 971.2h0M281.9 966.8h0M282.9 971.2h0M283.8 971.2h0M284.8 966.8h0M285.7 971.2h0M286.7 966.8h0M287.6 966.8h0M288.6 971.2h0M289.6 966.8h0M290.5 966.8h0M291.5 971.2h0M292.4 971.2h0M293.4 966.8h0M294.3 962.3h0M295.3 966.8h0M296.2 966.8h0M297.2 966.8h0M298.1 966.8h0M299.1 966.8h0M300.0 966.8h0M301.0 966.8h0M301.9 966.8h0M302.9 971.2h0M303.8 966.8h0M304.8 971.2h0M305.7 966.8h0M306.7 971.2h0M307.6 962.3h0M308.6 971.2h0M309.5 966.8h0M310.5 966.8h0M311.4 966.8h0M312.4 966.8h0M313.3 971.2h0M314.3 971.2h0M315.2 971.2h0M316.2 962.3h0M317.1 975.7h0M318.1 962.3h0M319.0 971.2h0M320.0 971.2h0M320.9 971.2h0M321.9 966.8h0M322.9 966.8h0M323.8 971.2h0M324.8 971.2h0M325.7 971.2h0M326.7 966.8h0M327.6 966.8h0M328.6 975.7h0M329.5 966.8h0M330.5 971.2h0M331.4 971.2h0M332.4 971.2h0M333.3 966.8h0M334.3 971.2h0M335.2 971.2h0M336.2 971.2h0M337.1 971.2h0M338.1 971.2h0M339.0 962.3h0M340.0 975.7h0M340.9 971.2h0M341.9 971.2h0M342.8 966.8h0M343.8 966.8h0M344.7 962.3h0M345.7 966.8h0M346.6 966.8h0M347.6 971.2h0M348.5 966.8h0M349.5 966.8h0M350.4 971.2h0M351.4 962.3h0M352.3 971.2h0M353.3 966.8h0M354.2 966.8h0M355.2 971.2h0M356.1 962.3h0M357.1 966.8h0M358.1 966.8h0M359.0 971.2h0M360.0 966.8h0M360.9 966.8h0M361.9 971.2h0M362.8 971.2h0M363.8 962.3h0M364.7 966.8h0M365.7 966.8h0M366.6 966.8h0M367.6 975.7h0M368.5 962.3h0M369.5 971.2h0M370.4 962.3h0M371.4 971.2h0M372.3 971.2h0M373.3 971.2h0M374.2 966.8h0M375.2 962.3h0M376.1 966.8h0M377.1 962.3h0M378.0 966.8h0M379.0 966.8h0M379.9 966.8h0M380.9 962.3h0M381.8 966.8h0M382.8 966.8h0M383.7 971.2h0M384.7 966.8h0M385.6 971.2h0M386.6 971.2h0M387.5 971.2h0M388.5 966.8h0M389.4 971.2h0M390.4 966.8h0M391.4 962.3h0M392.3 966.8h0M393.3 962.3h0M394.2 966.8h0M395.2 962.3h0M396.1 971.2h0M397.1 971.2h0M398.0 966.8h0M399.0 966.8h0M399.9 966.8h0M400.9 971.2h0M401.8 966.8h0M402.8 966.8h0M403.7 966.8h0M404.7 962.3h0M405.6 966.8h0M406.6 962.3h0M407.5 971.2h0M408.5 971.2h0M409.4 971.2h0M410.4 966.8h0M411.3 971.2h0M412.3 971.2h0M413.2 971.2h0M414.2 966.8h0M415.1 966.8h0M416.1 966.8h0M417.0 966.8h0M418.0 971.2h0M418.9 971.2h0M419.9 971.2h0M420.8 971.2h0M421.8 971.2h0M422.7 971.2h0M423.7 971.2h0M424.7 971.2h0M425.6 971.2h0M426.6 971.2h0M427.5 966.8h0M428.5 966.8h0M429.4 966.8h0M430.4 966.8h0M431.3 966.8h0M432.3 966.8h0M433.2 962.3h0M434.2 971.2h0M435.1 971.2h0M436.1 966.8h0M437.0 971.2h0M438.0 962.3h0M438.9 971.2h0M439.9 975.7h0M440.8 966.8h0M441.8 971.2h0M442.7 966.8h0M443.7 966.8h0M444.6 962.3h0M445.6 971.2h0M446.5 966.8h0M447.5 975.7h0M448.4 971.2h0M449.4 966.8h0M450.3 971.2h0M451.3 966.8h0M452.2 971.2h0M453.2 971.2h0M454.1 966.8h0M455.1 966.8h0M456.0 966.8h0M457.0 971.2h0M458.0 966.8h0M458.9 971.2h0M459.9 966.8h0M460.8 971.2h0M461.8 971.2h0M462.7 971.2h0M463.7 966.8h0M464.6 966.8h0M465.6 966.8h0M466.5 971.2h0M467.5 966.8h0M468.4 971.2h0M469.4 962.3h0M470.3 966.8h0M471.3 962.3h0M472.2 975.7h0M473.2 966.8h0M474.1 966.8h0M475.1 971.2h0M476.0 971.2h0M477.0 966.8h0M477.9 966.8h0M478.9 966.8h0M479.8 971.2h0M480.8 971.2h0M481.7 966.8h0M482.7 966.8h0M483.6 971.2h0M484.6 971.2h0M485.5 966.8h0M486.5 971.2h0M487.4 971.2h0M488.4 966.8h0M489.3 971.2h0M490.3 962.3h0M491.2 975.7h0M492.2 966.8h0M493.2 971.2h0M494.1 971.2h0M495.1 966.8h0M496.0 971.2h0M497.0 966.8h0M497.9 966.8h0M498.9 971.2h0M499.8 971.2h0M500.8 971.2h0M501.7 971.2h0M502.7 971.2h0M503.6 966.8h0M504.6 966.8h0M505.5 966.8h0M506.5 962.3h0M507.4 971.2h0M508.4 966.8h0M509.3 966.8h0M510.3 971.2h0M511.2 971.2h0M512.2 966.8h0M513.1 971.2h0M514.1 966.8h0M515.0 971.2h0M516.0 975.7h0M516.9 971.2h0M517.9 966.8h0M518.8 966.8h0M519.8 971.2h0M520.7 971.2h0M521.7 966.8h0M522.6 975.7h0M523.6 971.2h0M524.5 966.8h0M525.5 966.8h0M526.5 971.2h0M527.4 971.2h0M528.4 971.2h0M529.3 971.2h0M530.3 971.2h0M531.2 971.2h0M532.2 971.2h0M533.1 971.2h0M534.1 971.2h0M535.0 962.3h0M536.0 971.2h0M536.9 966.8h0M537.9 962.3h0M538.8 971.2h0M539.8 966.8h0M540.7 966.8h0M541.7 971.2h0M542.6 962.3h0M543.6 975.7h0M544.5 971.2h0M545.5 962.3h0M546.4 966.8h0M547.4 966.8h0M548.3 966.8h0M549.3 962.3h0M550.2 971.2h0M551.2 962.3h0M552.1 966.8h0M553.1 966.8h0M554.0 971.2h0M555.0 971.2h0M555.9 971.2h0M556.9 966.8h0M557.8 971.2h0M558.8 962.3h0M559.8 966.8h0M560.7 966.8h0M561.7 966.8h0M562.6 975.7h0M563.6 966.8h0M564.5 962.3h0M565.5 971.2h0M566.4 966.8h0M567.4 966.8h0M568.3 966.8h0M569.3 971.2h0M570.2 971.2h0M571.2 966.8h0M572.1 971.2h0M573.1 966.8h0M574.0 971.2h0M575.0 971.2h0M575.9 971.2h0M576.9 975.7h0M577.8 962.3h0M578.8 975.7h0M579.7 966.8h0M580.7 966.8h0M581.6 971.2h0M582.6 966.8h0M583.5 971.2h0M584.5 962.3h0M585.4 966.8h0M586.4 966.8h0M587.3 971.2h0M588.3 966.8h0M589.2 962.3h0M590.2 966.8h0M591.1 966.8h0M592.1 971.2h0M593.0 966.8h0M594.0 971.2h0M595.0 962.3h0M595.9 966.8h0M596.9 971.2h0M597.8 966.8h0M598.8 962.3h0M599.7 966.8h0M600.7 962.3h0M601.6 971.2h0M602.6 966.8h0M603.5 962.3h0M604.5 966.8h0M605.4 975.7h0M606.4 971.2h0M607.3 966.8h0M608.3 966.8h0M609.2 971.2h0M610.2 971.2h0M611.1 966.8h0M612.1 971.2h0M613.0 966.8h0M614.0 966.8h0M614.9 966.8h0M615.9 966.8h0M616.8 966.8h0M617.8 971.2h0M618.7 971.2h0M619.7 962.3h0M620.6 971.2h0M621.6 966.8h0M622.5 962.3h0M623.5 975.7h0M624.4 966.8h0M625.4 966.8h0M626.3 962.3h0M627.3 975.7h0M628.3 966.8h0M629.2 971.2h0M630.2 962.3h0M631.1 966.8h0M632.1 962.3h0M633.0 971.2h0M634.0 962.3h0M634.9 971.2h0M635.9 971.2h0M636.8 966.8h0M637.8 971.2h0M638.7 962.3h0M639.7 971.2h0M640.6 962.3h0M641.6 971.2h0M642.5 971.2h0M643.5 962.3h0M644.4 966.8h0M645.4 966.8h0M646.3 971.2h0M647.3 971.2h0M648.2 971.2h0M649.2 966.8h0M650.1 966.8h0M651.1 971.2h0M652.0 962.3h0M653.0 966.8h0M653.9 966.8h0M654.9 966.8h0M655.8 971.2h0M656.8 966.8h0M657.7 975.7h0M658.7 962.3h0M659.6 966.8h0M660.6 966.8h0M661.6 966.8h0M662.5 966.8h0M663.5 966.8h0M664.4 971.2h0M665.4 971.2h0M666.3 966.8h0M667.3 966.8h0M668.2 971.2h0M669.2 971.2h0M670.1 971.2h0M671.1 971.2h0M672.0 971.2h0M673.0 971.2h0M673.9 971.2h0M674.9 971.2h0M675.8 971.2h0M676.8 971.2h0M677.7 966.8h0M678.7 971.2h0M679.6 971.2h0M680.6 966.8h0M681.5 971.2h0M682.5 971.2h0M683.4 966.8h0M684.4 962.3h0M685.3 971.2h0M686.3 971.2h0M687.2 966.8h0M688.2 971.2h0M689.1 971.2h0M690.1 966.8h0M691.0 966.8h0M692.0 966.8h0M692.9 962.3h0M693.9 966.8h0M694.8 971.2h0M695.8 966.8h0M696.8 966.8h0M697.7 966.8h0M698.7 966.8h0M699.6 966.8h0M700.6 966.8h0M701.5 971.2h0M702.5 966.8h0M703.4 966.8h0M704.4 971.2h0M705.3 971.2h0M706.3 966.8h0M707.2 966.8h0M708.2 966.8h0M709.1 966.8h0M710.1 971.2h0M711.0 971.2h0M712.0 962.3h0M712.9 971.2h0M713.9 971.2h0M714.8 971.2h0M715.8 966.8h0M716.7 971.2h0M717.7 966.8h0M718.6 971.2h0M719.6 966.8h0M720.5 962.3h0M721.5 966.8h0M722.4 971.2h0M723.4 971.2h0M724.3 966.8h0M725.3 966.8h0M726.2 971.2h0M727.2 971.2h0M728.1 966.8h0M729.1 971.2h0M730.1 966.8h0M731.0 971.2h0M732.0 971.2h0M732.9 975.7h0M733.9 971.2h0M734.8 975.7h0M735.8 962.3h0M736.7 971.2h0M737.7 966.8h0M738.6 966.8h0M739.6 966.8h0M740.5 971.2h0M741.5 971.2h0M742.4 966.8h0M743.4 966.8h0M744.3 966.8h0M745.3 971.2h0M746.2 971.2h0M747.2 966.8h0M748.1 971.2h0M749.1 971.2h0M750.0 966.8h0M751.0 966.8h0M751.9 975.7h0M752.9 971.2h0M753.8 966.8h0M754.8 975.7h0M755.7 971.2h0M756.7 966.8h0M757.6 966.8h0M758.6 971.2h0M759.5 962.3h0M760.5 971.2h0M761.4 971.2h0M762.4 971.2h0M763.4 971.2h0M764.3 966.8h0M765.3 966.8h0M766.2 971.2h0M767.2 962.3h0M768.1 971.2h0M769.1 966.8h0M770.0 966.8h0M771.0 971.2h0M771.9 966.8h0M772.9 980.1h0M773.8 971.2h0M774.8 962.3h0M775.7 971.2h0M776.7 966.8h0M777.6 971.2h0M778.6 971.2h0M779.5 966.8h0M780.5 966.8h0M781.4 966.8h0M782.4 966.8h0M783.3 971.2h0M784.3 966.8h0M785.2 971.2h0M786.2 966.8h0M787.1 971.2h0M788.1 966.8h0M789.0 971.2h0M790.0 971.2h0M790.9 971.2h0M791.9 966.8h0M792.8 962.3h0M793.8 975.7h0M794.7 971.2h0M795.7 971.2h0M796.6 962.3h0M797.6 975.7h0M798.6 962.3h0M799.5 975.7h0M800.5 971.2h0M801.4 971.2h0M802.4 971.2h0M803.3 966.8h0M804.3 966.8h0M805.2 966.8h0M806.2 975.7h0M807.1 966.8h0M808.1 962.3h0M809.0 971.2h0M810.0 966.8h0M810.9 966.8h0M811.9 971.2h0M812.8 971.2h0M813.8 971.2h0M814.7 966.8h0M815.7 962.3h0M816.6 975.7h0M817.6 966.8h0M818.5 971.2h0M819.5 966.8h0M820.4 966.8h0M821.4 966.8h0M822.3 966.8h0M823.3 975.7h0M824.2 966.8h0M825.2 971.2h0M826.1 971.2h0M827.1 971.2h0M828.0 971.2h0M829.0 971.2h0M829.9 971.2h0M830.9 966.8h0M831.9 971.2h0M832.8 971.2h0M833.8 962.3h0M834.7 966.8h0M835.7 971.2h0M836.6 966.8h0M837.6 966.8h0M838.5 971.2h0M839.5 966.8h0M840.4 966.8h0M841.4 971.2h0M842.3 971.2h0M843.3 966.8h0M844.2 962.3h0M845.2 966.8h0M846.1 966.8h0M847.1 971.2h0M848.0 971.2h0M849.0 966.8h0M849.9 971.2h0M850.9 971.2h0M851.8 962.3h0M852.8 966.8h0M853.7 971.2h0M854.7 962.3h0M855.6 971.2h0M856.6 971.2h0M857.5 971.2h0M858.5 971.2h0M859.4 971.2h0M860.4 966.8h0M861.3 962.3h0M862.3 971.2h0M863.2 971.2h0M864.2 966.8h0M865.2 971.2h0M866.1 971.2h0M867.1 971.2h0M868.0 971.2h0M869.0 966.8h0M869.9 962.3h0M870.9 971.2h0M871.8 962.3h0M872.8 971.2h0M873.7 971.2h0M874.7 966.8h0M875.6 971.2h0M876.6 966.8h0M877.5 971.2h0M878.5 971.2h0M879.4 966.8h0M880.4 966.8h0M881.3 962.3h0M882.3 975.7h0M883.2 971.2h0M884.2 971.2h0M885.1 971.2h0M886.1 966.8h0M887.0 962.3h0M888.0 971.2h0M888.9 962.3h0M889.9 971.2h0M890.8 966.8h0M891.8 966.8h0M892.7 966.8h0M893.7 971.2h0M894.6 971.2h0M895.6 971.2h0M896.5 966.8h0M897.5 971.2h0M898.4 971.2h0M899.4 962.3h0M900.4 971.2h0M901.3 966.8h0M902.3 966.8h0M903.2 971.2h0M904.2 966.8h0M905.1 966.8h0M906.1 966.8h0M907.0 962.3h0M908.0 971.2h0M908.9 971.2h0M909.9 966.8h0M910.8 966.8h0M911.8 966.8h0M912.7 971.2h0M913.7 966.8h0M914.6 966.8h0M915.6 966.8h0M916.5 971.2h0M917.5 966.8h0M918.4 971.2h0M919.4 966.8h0M920.3 971.2h0M921.3 966.8h0M922.2 971.2h0M923.2 971.2h0M924.1 966.8h0M925.1 966.8h0M926.0 971.2h0M927.0 962.3h0M927.9 966.8h0M928.9 975.7h0M929.8 971.2h0M930.8 962.3h0M931.7 966.8h0M932.7 966.8h0M933.7 971.2h0M934.6 966.8h0M935.6 966.8h0M936.5 971.2h0M937.5 971.2h0M938.4 971.2h0M939.4 966.8h0M940.3 971.2h0M941.3 971.2h0M942.2 962.3h0M943.2 971.2h0M944.1 966.8h0M945.1 966.8h0M946.0 966.8h0M947.0 966.8h0M947.9 966.8h0M948.9 971.2h0M949.8 966.8h0M950.8 966.8h0M951.7 971.2h0M952.7 962.3h0M953.6 971.2h0M954.6 971.2h0M955.5 971.2h0M956.5 962.3h0M957.4 975.7h0M958.4 971.2h0M959.3 966.8h0M960.3 966.8h0M961.2 966.8h0M962.2 962.3h0M963.1 971.2h0M964.1 971.2h0M965.0 966.8h0M966.0 966.8h0M967.0 971.2h0M967.9 971.2h0M968.9 971.2h0M969.8 971.2h0M970.8 966.8h0M971.7 971.2h0M972.7 962.3h0M973.6 971.2h0M974.6 971.2h0M975.5 971.2h0M976.5 966.8h0M977.4 971.2h0M978.4 971.2h0M979.3 966.8h0M980.3 966.8h0M981.2 966.8h0M982.2 966.8h0M983.1 971.2h0M984.1 966.8h0M985.0 971.2h0M986.0 966.8h0M986.9 966.8h0M987.9 966.8h0M988.8 975.7h0M989.8 971.2h0M990.7 962.3h0M991.7 966.8h0M992.6 966.8h0M993.6 971.2h0M994.5 971.2h0M995.5 966.8h0M996.4 971.2h0M997.4 962.3h0M998.3 971.2h0M999.3 971.2h0M1000.2 966.8h0M1001.2 966.8h0M1002.2 971.2h0M1003.1 971.2h0M1004.1 971.2h0M1005.0 966.8h0M1006.0 966.8h0M1006.9 971.2h0M1007.9 971.2h0M1008.8 962.3h0M1009.8 966.8h0M1010.7 966.8h0M1011.7 971.2h0M1012.6 971.2h0M1013.6 962.3h0M1014.5 966.8h0M1015.5 966.8h0M1016.4 971.2h0M1017.4 966.8h0M1018.3 962.3h0M1019.3 966.8h0M1020.2 962.3h0M1021.2 966.8h0M1022.1 966.8h0M1023.1 971.2h0M1024.0 971.2h0M1025.0 971.2h0M1025.9 966.8h0M1026.9 971.2h0M1027.8 966.8h0M1028.8 971.2h0M1029.7 962.3h0M1030.7 971.2h0M1031.6 966.8h0M1032.6 966.8h0M1033.5 966.8h0M1034.5 966.8h0M1035.5 971.2h0M1036.4 971.2h0M1037.4 966.8h0M1038.3 962.3h0M1039.3 966.8h0M1040.2 966.8h0M1041.2 971.2h0M1042.1 966.8h0M1043.1 966.8h0M1044.0 966.8h0M1045.0 971.2h0M1045.9 971.2h0M1046.9 966.8h0M1047.8 966.8h0M1048.8 966.8h0M1049.7 971.2h0M1050.7 971.2h0M1051.6 971.2h0M1052.6 971.2h0M1053.5 966.8h0M1054.5 966.8h0M1055.4 962.3h0M1056.4 971.2h0M1057.3 966.8h0M1058.3 971.2h0M1059.2 971.2h0M1060.2 966.8h0M1061.1 966.8h0M1062.1 966.8h0M1063.0 966.8h0M1064.0 966.8h0M1064.9 966.8h0M1065.9 966.8h0M1066.8 962.3h0M1067.8 971.2h0M1068.8 962.3h0M1069.7 966.8h0M1070.7 962.3h0M1071.6 975.7h0M1072.6 966.8h0M1073.5 966.8h0M1074.5 971.2h0M1075.4 971.2h0M1076.4 962.3h0M1077.3 966.8h0M1078.3 966.8h0M1079.2 966.8h0M1080.2 966.8h0M1081.1 971.2h0M1082.1 971.2h0M1083.0 971.2h0M1084.0 975.7h0M1084.9 966.8h0M1085.9 966.8h0M1086.8 971.2h0M1087.8 966.8h0M1088.7 966.8h0M1089.7 966.8h0M1090.6 966.8h0M1091.6 962.3h0M1092.5 971.2h0M1093.5 966.8h0M1094.4 966.8h0M1095.4 971.2h0M1096.3 966.8h0M1097.3 966.8h0M1098.2 971.2h0M1099.2 966.8h0M1100.1 966.8h0M1101.1 966.8h0M1102.1 966.8h0M1103.0 962.3h0M1104.0 966.8h0M1104.9 966.8h0M1105.9 971.2h0M1106.8 971.2h0M1107.8 966.8h0M1108.7 971.2h0M1109.7 971.2h0M1110.6 971.2h0M1111.6 971.2h0M1112.5 971.2h0M1113.5 962.3h0M1114.4 966.8h0M1115.4 971.2h0M1116.3 971.2h0M1117.3 966.8h0M1118.2 966.8h0M1119.2 966.8h0M1120.1 971.2h0M1121.1 975.7h0M1122.0 966.8h0M1123.0 966.8h0M1123.9 971.2h0M1124.9 971.2h0M1125.8 971.2h0M1126.8 966.8h0M1127.7 962.3h0M1128.7 975.7h0M1129.6 971.2h0M1130.6 966.8h0M1131.5 966.8h0M1132.5 971.2h0M1133.4 971.2h0M1134.4 966.8h0M1135.3 971.2h0M1136.3 966.8h0M1137.3 971.2h0M1138.2 962.3h0M1139.2 971.2h0M1140.1 971.2h0M1141.1 966.8h0M1142.0 966.8h0M1143.0 966.8h0M1143.9 962.3h0M1144.9 975.7h0M1145.8 962.3h0M1146.8 966.8h0M1147.7 971.2h0M1148.7 966.8h0M1149.6 962.3h0M1150.6 966.8h0M1151.5 966.8h0M1152.5 971.2h0M1153.4 971.2h0M1154.4 962.3h0M1155.3 971.2h0M1156.3 966.8h0M1157.2 971.2h0M1158.2 971.2h0M1159.1 971.2h0M1160.1 966.8h0M1161.0 966.8h0M1162.0 966.8h0M1162.9 971.2h0M1163.9 971.2h0M1164.8 962.3h0M1165.8 966.8h0M1166.7 966.8h0M1167.7 966.8h0M1168.6 966.8h0M1169.6 966.8h0M1170.6 966.8h0M1171.5 971.2h0M1172.5 971.2h0M1173.4 966.8h0M1174.4 971.2h0M1175.3 962.3h0M1176.3 971.2h0M1177.2 966.8h0M1178.2 966.8h0M1179.1 971.2h0M1180.1 971.2h0M1181.0 962.3h0M1182.0 971.2h0M1182.9 971.2h0M1183.9 966.8h0M1184.8 971.2h0M1185.8 966.8h0M1186.7 971.2h0M1187.7 971.2h0M1188.6 966.8h0M1189.6 966.8h0M1190.5 962.3h0M1191.5 971.2h0M1192.4 966.8h0M1193.4 971.2h0M1194.3 966.8h0M1195.3 966.8h0M1196.2 971.2h0M1197.2 966.8h0M1198.1 966.8h0M1199.1 966.8h0M1200.0 966.8h0M1201.0 971.2h0M1201.9 971.2h0M1202.9 962.3h0M1203.9 971.2h0M1204.8 971.2h0M1205.8 971.2h0M1206.7 966.8h0M1207.7 971.2h0M1208.6 971.2h0M1209.6 966.8h0M1210.5 966.8h0M1211.5 962.3h0M1212.4 966.8h0M1213.4 966.8h0M1214.3 966.8h0M1215.3 966.8h0M1216.2 962.3h0M1217.2 966.8h0M1218.1 971.2h0M1219.1 966.8h0M1220.0 966.8h0M1221.0 962.3h0M1221.9 975.7h0M1222.9 966.8h0M1223.8 966.8h0M1224.8 966.8h0M1225.7 962.3h0M1226.7 971.2h0M1227.6 966.8h0M1228.6 971.2h0M1229.5 971.2h0M1230.5 971.2h0M1231.4 971.2h0M1232.4 966.8h0M1233.3 971.2h0M1234.3 966.8h0M1235.2 966.8h0M1236.2 971.2h0M1237.1 966.8h0M1238.1 975.7h0M1239.1 966.8h0M1240.0 966.8h0M1241.0 971.2h0M1241.9 971.2h0M1242.9 966.8h0M1243.8 966.8h0M1244.8 966.8h0M1245.7 966.8h0M1246.7 971.2h0M1247.6 971.2h0M1248.6 971.2h0M1249.5 971.2h0M1250.5 966.8h0M1251.4 966.8h0M1252.4 966.8h0M1253.3 966.8h0M1254.3 971.2h0M1255.2 971.2h0M1256.2 966.8h0M1257.1 971.2h0M1258.1 971.2h0M1259.0 966.8h0M1260.0 962.3h0M1260.9 971.2h0M1261.9 971.2h0M1262.8 962.3h0M1263.8 971.2h0M1264.7 971.2h0M1265.7 971.2h0M1266.6 966.8h0M1267.6 966.8h0M1268.5 962.3h0M1269.5 966.8h0M1270.4 971.2h0M1271.4 966.8h0M1272.4 966.8h0M1273.3 971.2h0M1274.3 971.2h0M1275.2 962.3h0M1276.2 966.8h0M1277.1 966.8h0M1278.1 971.2h0M1279.0 966.8h0M1280.0 971.2h0M1280.9 971.2h0M1281.9 971.2h0M1282.8 966.8h0M1283.8 971.2h0M1284.7 966.8h0M1285.7 966.8h0M1286.6 971.2h0M1287.6 971.2h0M1288.5 966.8h0M1289.5 966.8h0M1290.4 962.3h0M1291.4 966.8h0M1292.3 962.3h0M1293.3 971.2h0M1294.2 971.2h0M1295.2 971.2h0M1296.1 966.8h0M1297.1 966.8h0M1298.0 966.8h0M1299.0 971.2h0M1299.9 966.8h0M1300.9 971.2h0M1301.8 971.2h0M1302.8 971.2h0M1303.7 971.2h0M1304.7 971.2h0M1305.7 971.2h0M1306.6 971.2h0M1307.6 971.2h0M1308.5 971.2h0M1309.5 966.8h0M1310.4 962.3h0M1311.4 975.7h0M1312.3 966.8h0M1313.3 971.2h0M1314.2 962.3h0M1315.2 966.8h0M1316.1 966.8h0M1317.1 971.2h0M1318.0 962.3h0M1319.0 966.8h0M1319.9 966.8h0M1320.9 966.8h0M1321.8 971.2h0M1322.8 971.2h0M1323.7 971.2h0M1324.7 966.8h0M1325.6 971.2h0M1326.6 966.8h0M1327.5 971.2h0M1328.5 962.3h0M1329.4 971.2h0M1330.4 971.2h0M1331.3 966.8h0M1332.3 966.8h0M1333.2 971.2h0M1334.2 962.3h0M1335.1 971.2h0M1336.1 975.7h0M1337.0 971.2h0M1338.0 966.8h0M1338.9 971.2h0M1339.9 966.8h0M1340.9 971.2h0M1341.8 971.2h0M1342.8 962.3h0M1343.7 971.2h0M1344.7 966.8h0M1345.6 971.2h0M1346.6 971.2h0M1347.5 966.8h0M1348.5 971.2h0M1349.4 966.8h0M1350.4 971.2h0M1351.3 971.2h0M1352.3 966.8h0M1353.2 971.2h0M1354.2 966.8h0M1355.1 966.8h0M1356.1 966.8h0M1357.0 971.2h0M1358.0 971.2h0M1358.9 971.2h0M1359.9 971.2h0M1360.8 971.2h0M1361.8 971.2h0M1362.7 966.8h0M1363.7 971.2h0M1364.6 971.2h0M1365.6 966.8h0M1366.5 966.8h0M1367.5 962.3h0M1368.4 971.2h0M1369.4 971.2h0M1370.3 971.2h0M1371.3 966.8h0M1372.2 966.8h0M1373.2 975.7h0M1374.2 971.2h0M1375.1 962.3h0M1376.1 975.7h0M1377.0 971.2h0M1378.0 971.2h0M1378.9 966.8h0M1379.9 971.2h0M1380.8 966.8h0M1381.8 971.2h0M1382.7 971.2h0M1383.7 966.8h0M1384.6 966.8h0M1385.6 962.3h0M1386.5 966.8h0M1387.5 966.8h0M1388.4 966.8h0M1389.4 966.8h0M1390.3 971.2h0M1391.3 971.2h0M1392.2 971.2h0M1393.2 966.8h0M1394.1 971.2h0M1395.1 966.8h0M1396.0 962.3h0M1397.0 966.8h0M1397.9 966.8h0M1398.9 966.8h0M1399.8 971.2h0M1400.8 971.2h0M1401.7 966.8h0M1402.7 971.2h0M1403.6 966.8h0M1404.6 971.2h0M1405.5 971.2h0M1406.5 962.3h0M1407.5 971.2h0M1408.4 966.8h0M1409.4 966.8h0M1410.3 962.3h0M1411.3 971.2h0M1412.2 971.2h0M1413.2 971.2h0M1414.1 962.3h0M1415.1 966.8h0M1416.0 971.2h0M1417.0 962.3h0M1417.9 971.2h0M1418.9 966.8h0M1419.8 966.8h0M1420.8 971.2h0M1421.7 966.8h0M1422.7 966.8h0M1423.6 971.2h0M1424.6 966.8h0M1425.5 971.2h0M1426.5 966.8h0M1427.4 962.3h0M1428.4 966.8h0M1429.3 971.2h0M1430.3 971.2h0M1431.2 971.2h0M1432.2 966.8h0M1433.1 975.7h0M1434.1 971.2h0M1435.0 966.8h0M1436.0 966.8h0M1436.9 971.2h0M1437.9 962.3h0M1438.8 966.8h0M1439.8 971.2h0M1440.7 966.8h0M1441.7 971.2h0M1442.7 971.2h0M1443.6 971.2h0M1444.6 966.8h0M1445.5 962.3h0M1446.5 966.8h0M1447.4 966.8h0M1448.4 971.2h0M1449.3 971.2h0M1450.3 966.8h0M1451.2 971.2h0M1452.2 966.8h0M1453.1 966.8h0M1454.1 975.7h0M1455.0 971.2h0M1456.0 971.2h0M1456.9 966.8h0M1457.9 962.3h0M1458.8 975.7h0M1459.8 966.8h0M1460.7 966.8h0M1461.7 966.8h0M1462.6 971.2h0M1463.6 962.3h0M1464.5 966.8h0M1465.5 971.2h0M1466.4 966.8h0M1467.4 966.8h0M1468.3 966.8h0M1469.3 971.2h0M1470.2 966.8h0M1471.2 962.3h0M1472.1 975.7h0M1473.1 971.2h0M1474.0 966.8h0M1475.0 966.8h0M1476.0 966.8h0M1476.9 966.8h0M1477.9 971.2h0M1478.8 966.8h0M1479.8 966.8h0M1480.7 962.3h0M1481.7 971.2h0M1482.6 971.2h0M1483.6 971.2h0M1484.5 971.2h0M1485.5 971.2h0M1486.4 966.8h0M1487.4 966.8h0M1488.3 966.8h0M1489.3 971.2h0M1490.2 971.2h0M1491.2 971.2h0M1492.1 971.2h0M1493.1 962.3h0M1494.0 971.2h0M1495.0 971.2h0M1495.9 971.2h0M1496.9 971.2h0M1497.8 966.8h0M1498.8 980.1h0M1499.7 971.2h0M1500.7 966.8h0M1501.6 966.8h0M1502.6 966.8h0M1503.5 971.2h0M1504.5 971.2h0M1505.4 971.2h0M1506.4 971.2h0M1507.3 962.3h0M1508.3 971.2h0M1509.3 962.3h0M1510.2 971.2h0M1511.2 966.8h0M1512.1 971.2h0M1513.1 971.2h0M1514.0 966.8h0M1515.0 971.2h0M1515.9 971.2h0M1516.9 966.8h0M1517.8 966.8h0M1518.8 966.8h0M1519.7 971.2h0M1520.7 971.2h0M1521.6 966.8h0M1522.6 971.2h0M1523.5 966.8h0M1524.5 966.8h0M1525.4 971.2h0M1526.4 971.2h0M1527.3 962.3h0M1528.3 971.2h0M1529.2 971.2h0M1530.2 966.8h0M1531.1 966.8h0M1532.1 966.8h0M1533.0 971.2h0M1534.0 971.2h0M1534.9 971.2h0M1535.9 962.3h0M1536.8 966.8h0M1537.8 966.8h0M1538.7 966.8h0M1539.7 966.8h0M1540.6 966.8h0M1541.6 971.2h0M1542.5 971.2h0M1543.5 971.2h0M1544.5 966.8h0M1545.4 971.2h0M1546.4 966.8h0M1547.3 966.8h0M1548.3 971.2h0M1549.2 966.8h0M1550.2 971.2h0M1551.1 971.2h0M1552.1 971.2h0M1553.0 971.2h0M1554.0 966.8h0M1554.9 962.3h0M1555.9 966.8h0M1556.8 975.7h0M1557.8 971.2h0M1558.7 966.8h0M1559.7 966.8h0M1560.6 966.8h0M1561.6 966.8h0M1562.5 966.8h0M1563.5 971.2h0M1564.4 962.3h0M1565.4 966.8h0M1566.3 971.2h0M1567.3 966.8h0M1568.2 1006.9h0M1569.2 971.2h0M1570.1 971.2h0M1571.1 962.3h0M1572.0 966.8h0M1573.0 975.7h0M1573.9 962.3h0M1574.9 966.8h0M1575.8 966.8h0M1576.8 962.3h0M1577.8 975.7h0M1578.7 971.2h0M1579.7 966.8h0M1580.6 966.8h0M1581.6 971.2h0M1582.5 971.2h0M1583.5 971.2h0M1584.4 966.8h0M1585.4 971.2h0M1586.3 971.2h0M1587.3 971.2h0M1588.2 962.3h0M1589.2 966.8h0M1590.1 971.2h0M1591.1 962.3h0M1592.0 966.8h0M1593.0 971.2h0M1593.9 966.8h0M1594.9 966.8h0M1595.8 966.8h0M1596.8 971.2h0M1597.7 971.2h0M1598.7 971.2h0M1599.6 971.2h0M1600.6 966.8h0M1601.5 966.8h0M1602.5 971.2h0M1603.4 962.3h0M1604.4 975.7h0M1605.3 971.2h0M1606.3 971.2h0M1607.2 966.8h0M1608.2 962.3h0M1609.1 971.2h0M1610.1 966.8h0M1611.1 966.8h0M1612.0 966.8h0M1613.0 966.8h0M1613.9 966.8h0M1614.9 962.3h0M1615.8 975.7h0M1616.8 966.8h0M1617.7 966.8h0M1618.7 966.8h0M1619.6 962.3h0M1620.6 975.7h0M1621.5 971.2h0M1622.5 971.2h0M1623.4 966.8h0M1624.4 966.8h0M1625.3 966.8h0M1626.3 971.2h0M1627.2 971.2h0M1628.2 966.8h0M1629.1 966.8h0M1630.1 966.8h0M1631.0 971.2h0M1632.0 966.8h0M1632.9 971.2h0M1633.9 966.8h0M1634.8 966.8h0M1635.8 966.8h0M1636.7 966.8h0M1637.7 966.8h0M1638.6 966.8h0M1639.6 971.2h0M1640.5 966.8h0M1641.5 971.2h0M1642.4 966.8h0M1643.4 971.2h0M1644.4 966.8h0M1645.3 966.8h0M1646.3 966.8h0M1647.2 971.2h0M1648.2 971.2h0M1649.1 971.2h0M1650.1 966.8h0M1651.0 966.8h0M1652.0 962.3h0M1652.9 966.8h0M1653.9 966.8h0M1654.8 962.3h0M1655.8 971.2h0M1656.7 966.8h0M1657.7 966.8h0M1658.6 971.2h0M1659.6 971.2h0M1660.5 966.8h0M1661.5 971.2h0M1662.4 962.3h0M1663.4 966.8h0M1664.3 971.2h0M1665.3 966.8h0M1666.2 966.8h0M1667.2 966.8h0M1668.1 971.2h0M1669.1 966.8h0M1670.0 971.2h0M1671.0 971.2h0M1671.9 971.2h0M1672.9 962.3h0M1673.8 971.2h0M1674.8 966.8h0M1675.7 966.8h0M1676.7 966.8h0M1677.6 966.8h0M1678.6 971.2h0M1679.6 962.3h0M1680.5 975.7h0M1681.5 971.2h0M1682.4 962.3h0M1683.4 966.8h0M1684.3 971.2h0M1685.3 966.8h0M1686.2 971.2h0M1687.2 971.2h0M1688.1 966.8h0M1689.1 966.8h0M1690.0 966.8h0M1691.0 962.3h0M1691.9 971.2h0M1692.9 971.2h0M1693.8 971.2h0M1694.8 971.2h0M1695.7 966.8h0M1696.7 971.2h0M1697.6 966.8h0M1698.6 971.2h0M1699.5 966.8h0M1700.5 971.2h0M1701.4 966.8h0M1702.4 966.8h0M1703.3 966.8h0M1704.3 966.8h0M1705.2 962.3h0M1706.2 971.2h0M1707.1 962.3h0M1708.1 971.2h0M1709.0 966.8h0M1710.0 971.2h0M1710.9 966.8h0M1711.9 962.3h0M1712.9 966.8h0M1713.8 966.8h0M1714.8 971.2h0M1715.7 971.2h0M1716.7 966.8h0M1717.6 966.8h0M1718.6 971.2h0M1719.5 971.2h0M1720.5 966.8h0M1721.4 971.2h0M1722.4 966.8h0M1723.3 962.3h0M1724.3 966.8h0M1725.2 971.2h0M1726.2 966.8h0M1727.1 966.8h0M1728.1 971.2h0M1729.0 971.2h0M1730.0 971.2h0M1730.9 966.8h0M1731.9 971.2h0M1732.8 966.8h0M1733.8 966.8h0M1734.7 971.2h0M1735.7 971.2h0M1736.6 975.7h0M1737.6 971.2h0M1738.5 966.8h0M1739.5 971.2h0M1740.4 971.2h0M1741.4 966.8h0M1742.3 962.3h0M1743.3 966.8h0M1744.2 971.2h0M1745.2 966.8h0M1746.2 975.7h0M1747.1 962.3h0M1748.1 975.7h0M1749.0 966.8h0M1750.0 966.8h0M1750.9 966.8h0M1751.9 966.8h0M1752.8 966.8h0M1753.8 971.2h0M1754.7 971.2h0M1755.7 971.2h0M1756.6 966.8h0M1757.6 966.8h0M1758.5 966.8h0M1759.5 971.2h0M1760.4 971.2h0M1761.4 971.2h0M1762.3 966.8h0M1763.3 971.2h0M1764.2 966.8h0M1765.2 971.2h0M1766.1 962.3h0M1767.1 966.8h0M1768.0 966.8h0M1769.0 966.8h0M1769.9 966.8h0M1770.9 966.8h0M1771.8 971.2h0M1772.8 971.2h0M1773.7 971.2h0M1774.7 971.2h0M1775.6 971.2h0M1776.6 966.8h0M1777.5 971.2h0M1778.5 966.8h0M1779.4 966.8h0M1780.4 971.2h0M1781.4 971.2h0M1782.3 971.2h0M1783.3 971.2h0M1784.2 966.8h0M1785.2 971.2h0M1786.1 966.8h0M1787.1 966.8h0M1788.0 971.2h0M1789.0 962.3h0M1789.9 966.8h0M1790.9 966.8h0M1791.8 966.8h0M1792.8 966.8h0M1793.7 966.8h0M1794.7 971.2h0M1795.6 966.8h0M1796.6 966.8h0M1797.5 975.7h0M1798.5 966.8h0M1799.4 971.2h0M1800.4 966.8h0M1801.3 971.2h0M1802.3 966.8h0M1803.2 966.8h0M1804.2 966.8h0M1805.1 966.8h0M1806.1 966.8h0M1807.0 966.8h0M1808.0 966.8h0M1808.9 971.2h0M1809.9 971.2h0M1810.8 966.8h0M1811.8 966.8h0M1812.7 971.2h0M1813.7 962.3h0M1814.7 975.7h0M1815.6 966.8h0M1816.6 962.3h0M1817.5 971.2h0M1818.5 966.8h0M1819.4 966.8h0M1820.4 971.2h0M1821.3 971.2h0M1822.3 966.8h0M1823.2 971.2h0M1824.2 971.2h0M1825.1 966.8h0M1826.1 971.2h0M1827.0 971.2h0M1828.0 971.2h0M1828.9 971.2h0M1829.9 971.2h0M1830.8 966.8h0M1831.8 971.2h0M1832.7 971.2h0M1833.7 966.8h0M1834.6 971.2h0M1835.6 966.8h0M1836.5 966.8h0M1837.5 971.2h0M1838.4 966.8h0M1839.4 971.2h0M1840.3 966.8h0M1841.3 975.7h0M1842.2 971.2h0M1843.2 971.2h0M1844.1 966.8h0M1845.1 966.8h0M1846.0 971.2h0M1847.0 966.8h0M1848.0 966.8h0M1848.9 971.2h0M1849.9 971.2h0M1850.8 971.2h0M1851.8 971.2h0M1852.7 966.8h0M1853.7 962.3h0M1854.6 971.2h0M1855.6 971.2h0M1856.5 962.3h0M1857.5 966.8h0M1858.4 966.8h0M1859.4 966.8h0M1860.3 971.2h0M1861.3 962.3h0M1862.2 966.8h0M1863.2 971.2h0M1864.1 971.2h0M1865.1 966.8h0M1866.0 966.8h0M1867.0 962.3h0M1867.9 966.8h0M1868.9 971.2h0M1869.8 971.2h0M1870.8 966.8h0M1871.7 966.8h0M1872.7 966.8h0M1873.6 971.2h0M1874.6 966.8h0M1875.5 966.8h0M1876.5 966.8h0M1877.4 971.2h0M1878.4 966.8h0M1879.3 962.3h0M1880.3 966.8h0M1881.2 971.2h0M1882.2 962.3h0M1883.2 966.8h0M1884.1 971.2h0M1885.1 971.2h0M1886.0 962.3h0M1887.0 971.2h0M1887.9 962.3h0M1888.9 975.7h0M1889.8 971.2h0M1890.8 971.2h0M1891.7 962.3h0M1892.7 971.2h0M1893.6 966.8h0M1894.6 975.7h0M1895.5 971.2h0M1896.5 966.8h0M1897.4 975.7h0M1898.4 966.8h0M1899.3 962.3h0M1900.3 966.8h0M1901.2 971.2h0M1902.2 962.3h0M1903.1 966.8h0M1904.1 971.2h0M1905.0 971.2h0M1906.0 971.2h0M1906.9 966.8h0M1907.9 966.8h0M1908.8 962.3h0M1909.8 966.8h0M1910.7 971.2h0M1911.7 966.8h0M1912.6 971.2h0M1913.6 966.8h0M1914.5 975.7h0M1915.5 966.8h0" fill="none" stroke="#a83eb4" stroke-width="5" stroke-linecap="round"/>
<circle cx="1568.6" cy="1084.4" r="8.3" fill="#d23c46" fill-opacity="0.55"/>
<circle cx="1568.6" cy="1084.4" r="3.4" fill="#c8282f"/>
<defs><linearGradient id="sb" x1="0" y1="0" x2="0" y2="1"><stop offset="0" stop-color="#8cc4f8"/><stop offset="0.25" stop-color="#6cb0f3"/><stop offset="1" stop-color="#68adf2"/></linearGradient><linearGradient id="hd" x1="0" y1="0" x2="1" y2="0"><stop offset="0" stop-color="#f2f2f2"/><stop offset="0.55" stop-color="#e2e2e2"/><stop offset="1" stop-color="#b9bcc4"/></linearGradient></defs>
<rect x="100" y="1274.2" width="1800" height="17.6" fill="url(#sb)"/>
<line x1="100" y1="1274.6" x2="1900" y2="1274.6" stroke="#7fa8d8" stroke-width="1.1"/>
<line x1="100" y1="1276.3" x2="1900" y2="1276.3" stroke="#8cc6fa" stroke-width="1.2"/>
<line x1="100" y1="1291.3" x2="1900" y2="1291.3" stroke="#78a6d8" stroke-width="1.1"/>
<rect x="84.6" y="1270.8" width="26.6" height="24.2" rx="2.5" fill="url(#hd)" stroke="#a9adb6" stroke-width="1.2"/>
<line x1="93.2" y1="1278.8" x2="93.2" y2="1287.5" stroke="#6d7d95" stroke-width="1.6"/>
<line x1="97.7" y1="1278.8" x2="97.7" y2="1287.5" stroke="#6d7d95" stroke-width="1.6"/>
<line x1="102.2" y1="1278.8" x2="102.2" y2="1287.5" stroke="#6d7d95" stroke-width="1.6"/>
<rect x="1888.6" y="1270.8" width="26.6" height="24.2" rx="2.5" fill="url(#hd)" stroke="#a9adb6" stroke-width="1.2"/>
<line x1="1897.2" y1="1278.8" x2="1897.2" y2="1287.5" stroke="#6d7d95" stroke-width="1.6"/>
<line x1="1901.7" y1="1278.8" x2="1901.7" y2="1287.5" stroke="#6d7d95" stroke-width="1.6"/>
<line x1="1906.2" y1="1278.8" x2="1906.2" y2="1287.5" stroke="#6d7d95" stroke-width="1.6"/>
<rect x="558.5" y="1312.0" width="20.3" height="4.8" fill="#a83eb4"/>
<circle cx="568.7" cy="1314.4" r="2.75" fill="#fff" stroke="#a83eb4" stroke-width="2.3"/>
<text x="591" y="1318.0" font-size="15.5" fill="#333" font-family="Liberation Sans" textLength="27.4" lengthAdjust="spacingAndGlyphs">FPS</text>
<rect x="644.0" y="1312.0" width="20.3" height="4.8" fill="#6ab158"/>
<text x="676.4" y="1318.0" font-size="15.5" fill="#333" font-family="Liberation Sans" textLength="53.1" lengthAdjust="spacingAndGlyphs">Smooth</text>
<rect x="755.0" y="1312.0" width="20.3" height="4.8" fill="#4fa59c"/>
<text x="788" y="1318.0" font-size="15.5" fill="#333" font-family="Liberation Sans" textLength="87.8" lengthAdjust="spacingAndGlyphs">1%Low(FPS)</text>
<rect x="900.5" y="1312.0" width="20.3" height="4.8" fill="#3a3ae6"/>
<text x="933" y="1318.0" font-size="15.5" fill="#333" font-family="Liberation Sans" textLength="70.0" lengthAdjust="spacingAndGlyphs">SmallJank</text>
<rect x="1028.8" y="1312.0" width="20.3" height="4.8" fill="#e8702c"/>
<circle cx="1039.0" cy="1314.4" r="2.75" fill="#fff" stroke="#e8702c" stroke-width="2.3"/>
<text x="1061" y="1318.0" font-size="15.5" fill="#333" font-family="Liberation Sans" textLength="33.0" lengthAdjust="spacingAndGlyphs">Jank</text>
<rect x="1118.8" y="1312.0" width="20.3" height="4.8" fill="#d23c46"/>
<circle cx="1129.0" cy="1314.4" r="2.75" fill="#fff" stroke="#d23c46" stroke-width="2.3"/>
<text x="1151.7" y="1318.0" font-size="15.5" fill="#333" font-family="Liberation Sans" textLength="55.8" lengthAdjust="spacingAndGlyphs">BigJank</text>
<rect x="1232.6" y="1312.0" width="20.3" height="4.8" fill="#6c8ff2"/>
<text x="1265" y="1318.0" font-size="15.5" fill="#333" font-family="Liberation Sans" textLength="47.3" lengthAdjust="spacingAndGlyphs">Stutter</text>
<rect x="1337.8" y="1312.0" width="20.3" height="4.8" fill="#75cde3"/>
<text x="1370" y="1318.0" font-size="15.5" fill="#333" font-family="Liberation Sans" textLength="74.6" lengthAdjust="spacingAndGlyphs">InterFrame</text>
</svg>
<svg class="a" style="left:316.0px;top:563.3px" width="20" height="20" viewBox="0 0 20 20"><circle cx="10" cy="10" r="9.8" fill="#abadc0"/><path d="M6.5 7.4 A3.6 3.6 0 1 1 12.4 9.7 Q10.2 11 10.2 12.7" fill="none" stroke="#fff" stroke-width="2.6"/><rect x="8.8" y="13.9" width="2.8" height="2.3" fill="#fff"/></svg>
<svg class="a" style="left:1145.0px;top:563.3px" width="20" height="20" viewBox="0 0 20 20"><circle cx="10" cy="10" r="9.8" fill="#abadc0"/><path d="M6.5 7.4 A3.6 3.6 0 1 1 12.4 9.7 Q10.2 11 10.2 12.7" fill="none" stroke="#fff" stroke-width="2.6"/><rect x="8.8" y="13.9" width="2.8" height="2.3" fill="#fff"/></svg>
<svg class="a" style="left:1780.0px;top:563.3px" width="20" height="20" viewBox="0 0 20 20"><circle cx="10" cy="10" r="9.8" fill="#abadc0"/><path d="M6.5 7.4 A3.6 3.6 0 1 1 12.4 9.7 Q10.2 11 10.2 12.7" fill="none" stroke="#fff" stroke-width="2.6"/><rect x="8.8" y="13.9" width="2.8" height="2.3" fill="#fff"/></svg>
<svg class="a" style="left:144.0px;top:710.4px" width="20" height="20" viewBox="0 0 20 20"><circle cx="10" cy="10" r="9.8" fill="#abadc0"/><path d="M6.5 7.4 A3.6 3.6 0 1 1 12.4 9.7 Q10.2 11 10.2 12.7" fill="none" stroke="#fff" stroke-width="2.6"/><rect x="8.8" y="13.9" width="2.8" height="2.3" fill="#fff"/></svg>
<svg class="a" style="left:318.6px;top:710.4px" width="20" height="20" viewBox="0 0 20 20"><circle cx="10" cy="10" r="9.8" fill="#abadc0"/><path d="M6.5 7.4 A3.6 3.6 0 1 1 12.4 9.7 Q10.2 11 10.2 12.7" fill="none" stroke="#fff" stroke-width="2.6"/><rect x="8.8" y="13.9" width="2.8" height="2.3" fill="#fff"/></svg>
<svg class="a" style="left:1805.5px;top:710.4px" width="20" height="20" viewBox="0 0 20 20"><circle cx="10" cy="10" r="9.8" fill="#abadc0"/><path d="M6.5 7.4 A3.6 3.6 0 1 1 12.4 9.7 Q10.2 11 10.2 12.7" fill="none" stroke="#fff" stroke-width="2.6"/><rect x="8.8" y="13.9" width="2.8" height="2.3" fill="#fff"/></svg>
<span class="t" id="t0" style="left:142.50px;top:35.98px;font-size:24px;line-height:24px;color:#fff;font-weight:700;transform:scaleX(1.0271);transform-origin:0 0;">鸣潮</span>
<span class="t" id="t1" style="left:166.50px;top:78.92px;font-size:18px;line-height:18px;color:rgba(255,255,255,0.93);font-weight:400;transform:scaleX(1.0043);transform-origin:0 0;">Android版本名: 2.6.0</span>
<span class="t" id="t2" style="left:166.50px;top:103.32px;font-size:18px;line-height:18px;color:rgba(255,255,255,0.93);font-weight:400;transform:scaleX(0.9970);transform-origin:0 0;">Android版本号: 145597397</span>
<span class="t" id="t3" style="left:141.20px;top:135.22px;font-size:18px;line-height:18px;color:rgba(255,255,255,0.93);font-weight:400;transform:scaleX(1.0069);transform-origin:0 0;">com.kurogame.mingchao</span>
<span class="t" id="t4" style="left:653.00px;top:40.80px;font-size:25px;line-height:25px;color:#fff;font-weight:700;transform:scaleX(1.0313);transform-origin:0 0;">V2502DA</span>
<span class="t" id="t5" style="left:653.00px;top:90.92px;font-size:18px;line-height:18px;color:rgba(255,255,255,0.93);font-weight:400;transform:scaleX(0.9795);transform-origin:0 0;">Memory: 15G</span>
<span class="t" id="t6" style="left:653.00px;top:125.52px;font-size:18px;line-height:18px;color:rgba(255,255,255,0.93);font-weight:400;transform:scaleX(1.0218);transform-origin:0 0;">CPU: mt6993</span>
<span class="t" id="t7" style="left:653.00px;top:160.52px;font-size:18px;line-height:18px;color:rgba(255,255,255,0.93);font-weight:400;transform:scaleX(0.9897);transform-origin:0 0;">GPU: ARM Mali–G1–Ultra MC12</span>
<span class="t" id="t8" style="left:1129.50px;top:55.28px;font-size:24px;line-height:24px;color:#fff;font-weight:700;transform:scaleX(1.0389);transform-origin:0 0;">创建者</span>
<span class="t" id="t9" style="left:1128.30px;top:104.00px;font-size:20px;line-height:20px;color:rgba(255,255,255,0.93);font-weight:400;transform:scaleX(0.9587);transform-origin:0 0;">ZOL</span>
<span class="t" id="t10" style="left:1393.00px;top:55.28px;font-size:24px;line-height:24px;color:#fff;font-weight:700;transform:scaleX(1.0375);transform-origin:0 0;">时长</span>
<span class="t" id="t11" style="left:1392.00px;top:104.00px;font-size:20px;line-height:20px;color:rgba(255,255,255,0.93);font-weight:400;transform:scaleX(1.0044);transform-origin:0 0;">0h 32m 5s</span>
<span class="t" id="t12" style="left:1675.70px;top:55.58px;font-size:24px;line-height:24px;color:#fff;font-weight:700;transform:scaleX(1.0260);transform-origin:0 0;">上传时间</span>
<span class="t" id="t13" style="left:1674.50px;top:103.90px;font-size:20px;line-height:20px;color:rgba(255,255,255,0.93);font-weight:400;transform:scaleX(0.9977);transform-origin:0 0;">21/09/2025 17:34:22</span>
<span class="t" id="t14" style="left:1655.00px;top:12.07px;font-size:17.5px;line-height:17.5px;color:rgba(255,255,255,0.62);font-weight:400;transform:scaleX(1.0024);transform-origin:0 0;">数据由PerfDog(11.2.250408)版本收集</span>
<span class="t" id="t15" style="left:27.00px;top:207.46px;font-size:18px;line-height:18px;color:#fff;font-weight:400;transform:scaleX(0.9582);transform-origin:0 0;-webkit-text-stroke:0.45px #fff;">备注:</span>
<span class="t" id="t16" style="left:76.50px;top:207.46px;font-size:18px;line-height:18px;color:#a7b1f3;font-weight:400;transform:scaleX(0.9858);transform-origin:0 0;-webkit-text-stroke:0.25px #a7b1f3;">添加备注，不超过200个字符</span>
<span class="t" id="t17" style="left:10.00px;top:274.40px;font-size:20px;line-height:20px;color:#4659f5;font-weight:700;transform:scaleX(0.9700);transform-origin:0 0;">概览</span>
<span class="t" id="t18" style="left:99.50px;top:273.55px;font-size:20px;line-height:20px;color:#333;font-weight:400;transform:scaleX(0.9587);transform-origin:0 0;">FPS</span>
<span class="t" id="t19" style="left:187.00px;top:273.55px;font-size:20px;line-height:20px;color:#333;font-weight:400;transform:scaleX(0.9779);transform-origin:0 0;">CPU</span>
<span class="t" id="t20" style="left:279.00px;top:273.55px;font-size:20px;line-height:20px;color:#333;font-weight:400;transform:scaleX(1.0355);transform-origin:0 0;">Memory</span>
<span class="t" id="t21" style="left:404.00px;top:273.55px;font-size:20px;line-height:20px;color:#333;font-weight:400;transform:scaleX(0.9759);transform-origin:0 0;">GPU</span>
<span class="t" id="t22" style="left:496.60px;top:273.55px;font-size:20px;line-height:20px;color:#333;font-weight:400;transform:scaleX(1.0616);transform-origin:0 0;">Temperature</span>
<span class="t" id="t23" style="left:666.00px;top:273.55px;font-size:20px;line-height:20px;color:#333;font-weight:400;transform:scaleX(1.0405);transform-origin:0 0;">Thermal Status</span>
<span class="t" id="t24" style="left:857.40px;top:273.55px;font-size:20px;line-height:20px;color:#333;font-weight:400;transform:scaleX(1.0592);transform-origin:0 0;">Network</span>
<span class="t" id="t25" style="left:985.00px;top:273.55px;font-size:20px;line-height:20px;color:#333;font-weight:400;transform:scaleX(1.0455);transform-origin:0 0;">Brightness</span>
<span class="t" id="t26" style="left:1134.00px;top:273.55px;font-size:20px;line-height:20px;color:#333;font-weight:400;transform:scaleX(1.0764);transform-origin:0 0;">Battery</span>
<span class="t" id="t27" style="left:1896.20px;top:276.98px;font-size:17.5px;line-height:17.5px;color:#555;font-weight:400;transform:scaleX(0.9306);transform-origin:0 0;">导出</span>
<span class="t" id="t28" style="left:37.30px;top:350.05px;font-size:25px;line-height:25px;color:#333;font-weight:700;transform:scaleX(0.9780);transform-origin:0 0;">概览</span>
<span class="t" id="t29" style="left:37.50px;top:454.52px;font-size:25.5px;line-height:25.5px;color:#333;font-weight:500;transform:scaleX(0.9437);transform-origin:0 0;">FPS</span>
<span class="t" id="t30" style="left:57.20px;top:564.12px;font-size:18px;line-height:18px;color:#666;font-weight:400;transform:scaleX(0.9577);transform-origin:0 0;">Avg(FPS)</span>
<span class="t" id="t31" style="left:-206.00px;width:600px;text-align:center;top:610.04px;font-size:31px;line-height:31px;color:#333;font-weight:700;">59.7</span>
<span class="t" id="t32" style="left:169.30px;top:564.12px;font-size:18px;line-height:18px;color:#666;font-weight:400;transform:scaleX(0.9909);transform-origin:0 0;">Smooth(稳帧指数)</span>
<span class="t" id="t33" style="left:-47.40px;width:600px;text-align:center;top:610.04px;font-size:31px;line-height:31px;color:#333;font-weight:700;">1.4</span>
<span class="t" id="t34" style="left:374.00px;top:564.12px;font-size:18px;line-height:18px;color:#666;font-weight:400;transform:scaleX(0.9639);transform-origin:0 0;">1%Low(FPS)</span>
<span class="t" id="t35" style="left:124.70px;width:600px;text-align:center;top:610.04px;font-size:31px;line-height:31px;color:#333;font-weight:700;">31.4</span>
<span class="t" id="t36" style="left:513.40px;top:564.12px;font-size:18px;line-height:18px;color:#666;font-weight:400;transform:scaleX(0.9836);transform-origin:0 0;">Std(FPS)</span>
<span class="t" id="t37" style="left:249.40px;width:600px;text-align:center;top:610.04px;font-size:31px;line-height:31px;color:#333;font-weight:700;">0.8</span>
<span class="t" id="t38" style="left:623.00px;top:564.12px;font-size:18px;line-height:18px;color:#666;font-weight:400;transform:scaleX(0.9827);transform-origin:0 0;">Var(FPS)</span>
<span class="t" id="t39" style="left:358.80px;width:600px;text-align:center;top:610.04px;font-size:31px;line-height:31px;color:#333;font-weight:700;">0.6</span>
<span class="t" id="t40" style="left:732.30px;top:564.12px;font-size:18px;line-height:18px;color:#666;font-weight:400;transform:scaleX(0.9985);transform-origin:0 0;">FPS&gt;=18 [%]</span>
<span class="t" id="t41" style="left:485.30px;width:600px;text-align:center;top:610.04px;font-size:31px;line-height:31px;color:#333;font-weight:700;">100</span>
<span class="t" id="t42" style="left:876.00px;top:564.12px;font-size:18px;line-height:18px;color:#666;font-weight:400;transform:scaleX(1.0284);transform-origin:0 0;">FPS&gt;=25 [%]</span>
<span class="t" id="t43" style="left:630.70px;width:600px;text-align:center;top:610.04px;font-size:31px;line-height:31px;color:#333;font-weight:700;">100</span>
<span class="t" id="t44" style="left:1023.00px;top:564.12px;font-size:18px;line-height:18px;color:#666;font-weight:400;transform:scaleX(1.0377);transform-origin:0 0;">Drop(FPS) [/h]</span>
<span class="t" id="t45" style="left:794.00px;width:600px;text-align:center;top:610.04px;font-size:31px;line-height:31px;color:#333;font-weight:700;">1.9</span>
<span class="t" id="t46" style="left:1203.50px;top:564.12px;font-size:18px;line-height:18px;color:#666;font-weight:400;transform:scaleX(0.9645);transform-origin:0 0;">Min(FPS)</span>
<span class="t" id="t47" style="left:939.80px;width:600px;text-align:center;top:610.04px;font-size:31px;line-height:31px;color:#333;font-weight:700;">51</span>
<span class="t" id="t48" style="left:1315.00px;top:564.12px;font-size:18px;line-height:18px;color:#666;font-weight:400;transform:scaleX(0.9752);transform-origin:0 0;">Median(FPS)</span>
<span class="t" id="t49" style="left:1066.30px;width:600px;text-align:center;top:610.04px;font-size:31px;line-height:31px;color:#333;font-weight:700;">60</span>
<span class="t" id="t50" style="left:1456.50px;top:564.12px;font-size:18px;line-height:18px;color:#666;font-weight:400;transform:scaleX(0.9953);transform-origin:0 0;">MedRange(FPS)[%]</span>
<span class="t" id="t51" style="left:1235.40px;width:600px;text-align:center;top:610.04px;font-size:31px;line-height:31px;color:#333;font-weight:700;">100</span>
<span class="t" id="t52" style="left:1653.90px;top:538.32px;font-size:18px;line-height:18px;color:#666;font-weight:400;transform:scaleX(0.9830);transform-origin:0 0;">SmallJank(微小卡顿)</span>
<span class="t" id="t53" style="left:1701.80px;top:564.12px;font-size:18px;line-height:18px;color:#666;font-weight:400;transform:scaleX(1.0361);transform-origin:0 0;">(/10min)</span>
<span class="t" id="t54" style="left:1447.00px;width:600px;text-align:center;top:610.04px;font-size:31px;line-height:31px;color:#333;font-weight:700;">2.2</span>
<span class="t" id="t55" style="left:56.80px;top:685.32px;font-size:18px;line-height:18px;color:#666;font-weight:400;transform:scaleX(0.9928);transform-origin:0 0;">Jank(卡顿)</span>
<span class="t" id="t56" style="left:65.80px;top:710.52px;font-size:18px;line-height:18px;color:#666;font-weight:400;transform:scaleX(1.0210);transform-origin:0 0;">(/10min)</span>
<span class="t" id="t57" style="left:-189.60px;width:600px;text-align:center;top:757.14px;font-size:31px;line-height:31px;color:#333;font-weight:700;">0.3</span>
<span class="t" id="t58" style="left:201.90px;top:685.32px;font-size:18px;line-height:18px;color:#666;font-weight:400;transform:scaleX(0.9924);transform-origin:0 0;">BigJank(严重卡顿)</span>
<span class="t" id="t59" style="left:241.00px;top:710.52px;font-size:18px;line-height:18px;color:#666;font-weight:400;transform:scaleX(1.0316);transform-origin:0 0;">(/10min)</span>
<span class="t" id="t60" style="left:-13.40px;width:600px;text-align:center;top:757.14px;font-size:31px;line-height:31px;color:#333;font-weight:700;">0.3</span>
<span class="t" id="t61" style="left:409.00px;top:710.52px;font-size:18px;line-height:18px;color:#666;font-weight:400;transform:scaleX(1.0318);transform-origin:0 0;">Stutter(卡顿率) [%]</span>
<span class="t" id="t62" style="left:185.80px;width:600px;text-align:center;top:757.14px;font-size:31px;line-height:31px;color:#333;font-weight:700;">0</span>
<span class="t" id="t63" style="left:601.00px;top:710.52px;font-size:18px;line-height:18px;color:#666;font-weight:400;transform:scaleX(0.9962);transform-origin:0 0;">Avg(InterFrame)</span>
<span class="t" id="t64" style="left:365.70px;width:600px;text-align:center;top:757.14px;font-size:31px;line-height:31px;color:#333;font-weight:700;">0</span>
<span class="t" id="t65" style="left:768.20px;top:710.52px;font-size:18px;line-height:18px;color:#666;font-weight:400;transform:scaleX(0.9816);transform-origin:0 0;">Avg(FPS+InterFrame)</span>
<span class="t" id="t66" style="left:554.30px;width:600px;text-align:center;top:757.14px;font-size:31px;line-height:31px;color:#333;font-weight:700;">59.7</span>
<span class="t" id="t67" style="left:978.20px;top:710.52px;font-size:18px;line-height:18px;color:#666;font-weight:400;transform:scaleX(1.0196);transform-origin:0 0;">Avg(FTime) [ms]</span>
<span class="t" id="t68" style="left:745.00px;width:600px;text-align:center;top:757.14px;font-size:31px;line-height:31px;color:#333;font-weight:700;">16.8</span>
<span class="t" id="t69" style="left:1149.80px;top:710.52px;font-size:18px;line-height:18px;color:#666;font-weight:400;transform:scaleX(1.0073);transform-origin:0 0;">Std(FTime)</span>
<span class="t" id="t70" style="left:894.40px;width:600px;text-align:center;top:757.14px;font-size:31px;line-height:31px;color:#333;font-weight:700;">1.8</span>
<span class="t" id="t71" style="left:1277.60px;top:710.52px;font-size:18px;line-height:18px;color:#666;font-weight:400;transform:scaleX(1.0000);transform-origin:0 0;">Var(FTime)</span>
<span class="t" id="t72" style="left:1021.70px;width:600px;text-align:center;top:757.14px;font-size:31px;line-height:31px;color:#333;font-weight:700;">3.2</span>
<span class="t" id="t73" style="left:1404.30px;top:710.52px;font-size:18px;line-height:18px;color:#666;font-weight:400;transform:scaleX(1.0135);transform-origin:0 0;">FTime&gt;=100ms [%]</span>
<span class="t" id="t74" style="left:1183.00px;width:600px;text-align:center;top:757.14px;font-size:31px;line-height:31px;color:#333;font-weight:700;">0</span>
<span class="t" id="t75" style="left:1599.80px;top:710.52px;font-size:18px;line-height:18px;color:#666;font-weight:400;transform:scaleX(1.0227);transform-origin:0 0;">Delta(FTime)&gt;100ms [/h]</span>
<span class="t" id="t76" style="left:1412.00px;width:600px;text-align:center;top:757.14px;font-size:31px;line-height:31px;color:#333;font-weight:700;">1.9</span>
<span class="t" id="t77" style="left:34.30px;top:830.60px;font-size:20px;line-height:20px;color:#111;font-weight:700;transform:scaleX(0.9844);transform-origin:0 0;">FPS</span>
<span class="t" id="t78" style="left:1606.60px;top:829.12px;font-size:18px;line-height:18px;color:#333;font-weight:400;transform:scaleX(0.9569);transform-origin:0 0;">FPS(&gt;=)</span>
<span class="t" id="t79" style="left:1424.20px;width:600px;text-align:center;top:829.12px;font-size:18px;line-height:18px;color:#333;font-weight:400;">18</span>
<span class="t" id="t80" style="left:1517.00px;width:600px;text-align:center;top:829.12px;font-size:18px;line-height:18px;color:#333;font-weight:400;">25</span>
<span class="t" id="t81" style="left:1883.00px;top:830.50px;font-size:16.5px;line-height:16.5px;color:#4659f5;font-weight:400;transform:scaleX(0.9647);transform-origin:0 0;">重置</span>
<span class="t" id="t82" style="left:700.00px;width:600px;text-align:center;top:878.66px;font-size:18px;line-height:18px;color:#fff;font-weight:400;transform:scaleX(0.9179);transform-origin:50% 0;">label1</span>
<span class="t" id="t83" style="left:1818.00px;top:1304.52px;font-size:16px;line-height:16px;color:#4659f5;font-weight:400;transform:scaleX(0.9292);transform-origin:0 0;">全隐藏</span>

<!-- watermarks -->
<div class="wm" style="left:77px;top:282px">PerfDog</div>
<div class="wm" style="left:580px;top:282px">PerfDog</div>
<div class="wm" style="left:1083px;top:282px">PerfDog</div>
<div class="wm" style="left:77px;top:720px">PerfDog</div>
<div class="wm" style="left:580px;top:720px">PerfDog</div>
<div class="wm" style="left:1083px;top:720px">PerfDog</div>
</body></html>
